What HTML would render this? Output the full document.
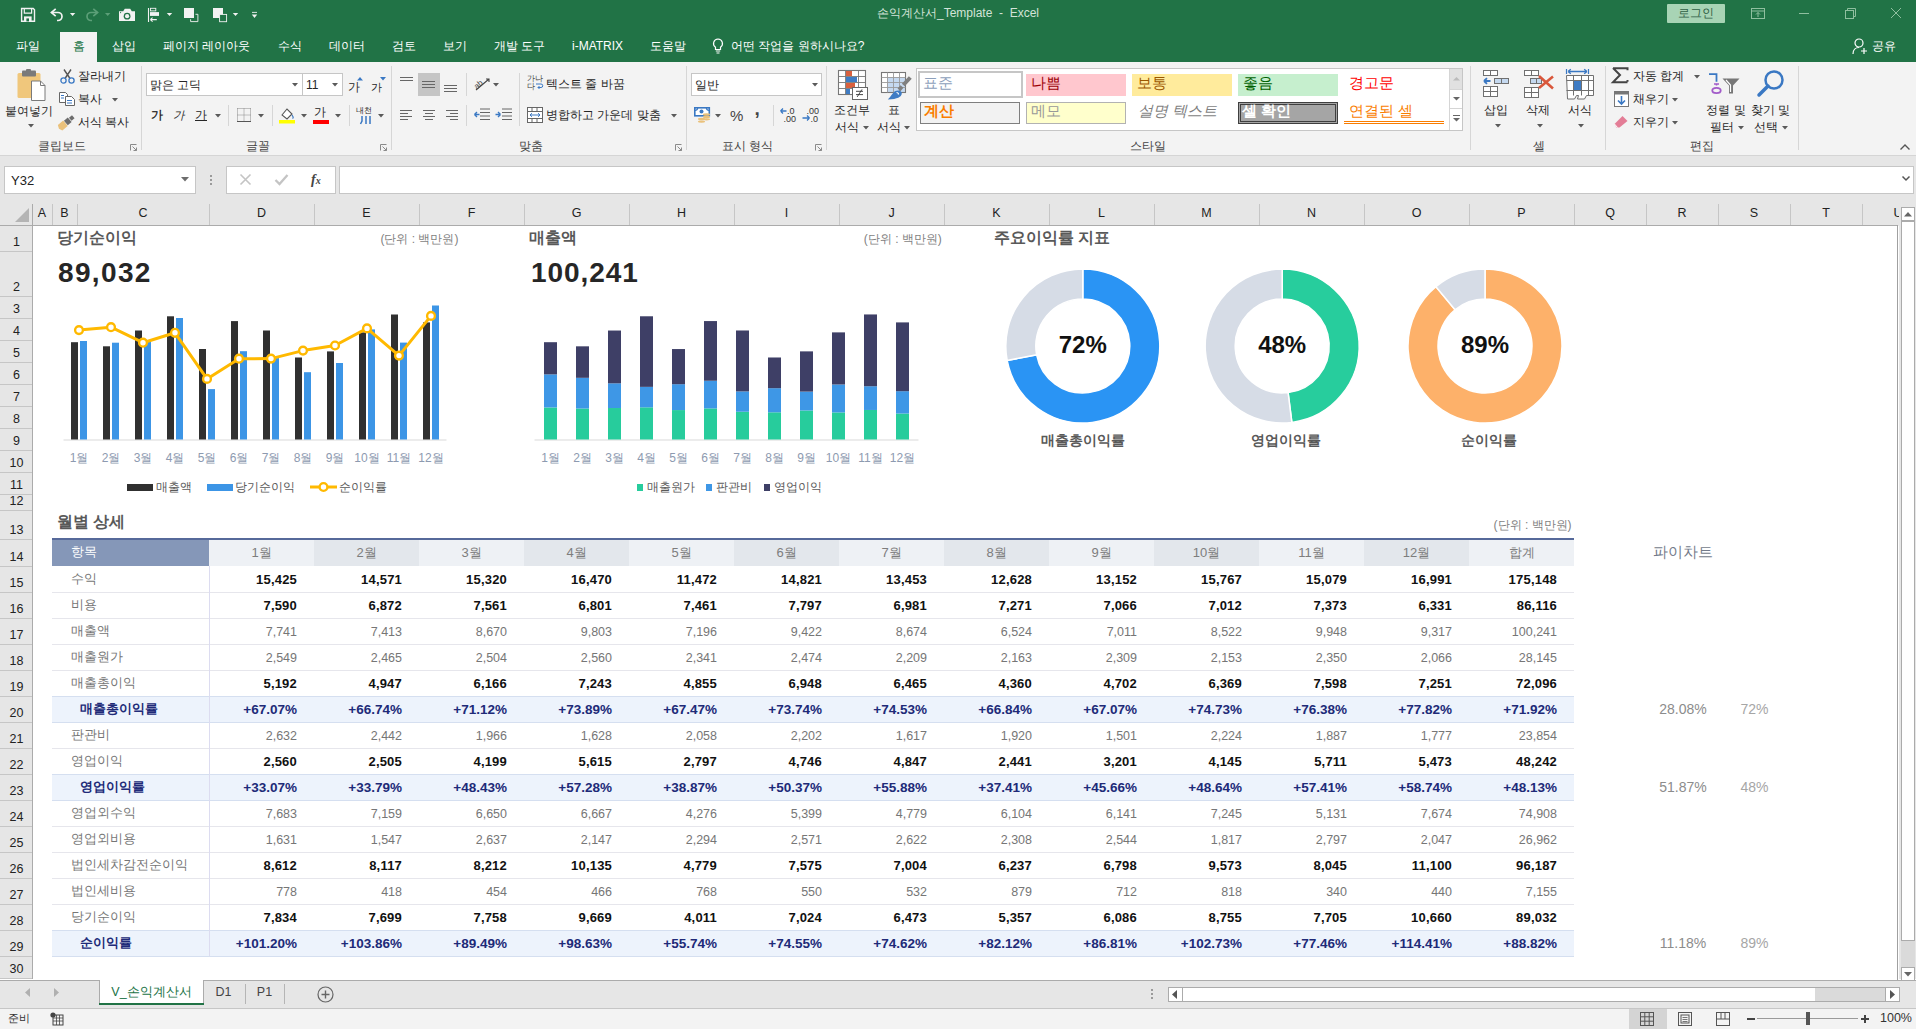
<!DOCTYPE html><html><head><meta charset="utf-8"><style>
html,body{margin:0;padding:0;}
body{width:1916px;height:1029px;position:relative;overflow:hidden;background:#fff;font-family:"Liberation Sans",sans-serif;}
.a{position:absolute;white-space:nowrap;}
svg.a{overflow:visible;}
</style></head><body>
<div class="a" style="left:0px;top:0px;width:1916px;height:62px;background:#217346;"></div>
<div class="a" style="left:0px;top:62px;width:1916px;height:93px;background:#f3f3f3;"></div>
<div class="a" style="left:0px;top:155px;width:1916px;height:1px;background:#d5d5d5;"></div>
<div class="a" style="left:0px;top:156px;width:1916px;height:70px;background:#e6e6e6;"></div>
<div class="a" style="left:0px;top:226px;width:32px;height:753px;background:#e6e6e6;"></div>
<svg class="a" style="left:0px;top:0px;" width="1" height="1" viewBox="0 0 1 1"><path d="M21.6 8.5h11.6l1.3 1.3v11.5h-12.9z" fill="none" stroke="#f2f2f2" stroke-width="1.4"/><path d="M24.3 8.5v4.6h7.3v-4.6" fill="none" stroke="#f2f2f2" stroke-width="1.2"/><rect x="24" y="16.4" width="7.6" height="5" fill="#f2f2f2"/><rect x="26.4" y="18.4" width="2.6" height="3" fill="#217346"/></svg>
<svg class="a" style="left:0px;top:0px;" width="1" height="1" viewBox="0 0 1 1"><path d="M51.5 12.5h6.5a4 4 0 0 1 0 8h-1" fill="none" stroke="#f2f2f2" stroke-width="1.7"/><path d="M55.7 8.8l-4.3 3.7l4.3 3.7" fill="none" stroke="#f2f2f2" stroke-width="1.7"/></svg>
<svg class="a" style="left:0px;top:0px;" width="1" height="1" viewBox="0 0 1 1"><path d="M69.9 12.9h5.4l-2.7 3z" fill="#f2f2f2"/></svg>
<svg class="a" style="left:0px;top:0px;" width="1" height="1" viewBox="0 0 1 1"><path d="M97.5 12.5h-6.5a4 4 0 0 0 0 8h1" fill="none" stroke="#5c9f78" stroke-width="1.7"/><path d="M93.3 8.8l4.3 3.7l-4.3 3.7" fill="none" stroke="#5c9f78" stroke-width="1.7"/></svg>
<svg class="a" style="left:0px;top:0px;" width="1" height="1" viewBox="0 0 1 1"><path d="M105 12.9h5.4l-2.7 3z" fill="#5c9f78"/></svg>
<svg class="a" style="left:0px;top:0px;" width="1" height="1" viewBox="0 0 1 1"><path d="M119 11.2h4.2l1.6-2.4h5.4l1.6 2.4h3.2v9.8h-16z" fill="#f2f2f2"/><circle cx="127.1" cy="16.2" r="3.4" fill="#217346"/><circle cx="127.1" cy="16.2" r="2.1" fill="#f2f2f2"/><circle cx="120.6" cy="12.6" r="0.6" fill="#217346"/></svg>
<svg class="a" style="left:0px;top:0px;" width="1" height="1" viewBox="0 0 1 1"><path d="M148.5 8v14" stroke="#f2f2f2" stroke-width="1.1"/><rect x="150.5" y="8.3" width="5.3" height="2.6" fill="none" stroke="#f2f2f2" stroke-width="0.9"/><rect x="150" y="12.1" width="9" height="3.8" fill="#f2f2f2"/><path d="M150.3 19.6h6.5M150.3 19.6l2.3-2M150.3 19.6l2.3 2" fill="none" stroke="#f2f2f2" stroke-width="1.1"/></svg>
<svg class="a" style="left:0px;top:0px;" width="1" height="1" viewBox="0 0 1 1"><path d="M166.8 12.9h5.4l-2.7 3z" fill="#f2f2f2"/></svg>
<svg class="a" style="left:0px;top:0px;" width="1" height="1" viewBox="0 0 1 1"><rect x="184" y="8" width="10" height="10" fill="#f2f2f2"/><path d="M195.5 14.3h2.4v7.3h-7.3v-2.4" fill="none" stroke="#f2f2f2" stroke-width="0.9"/></svg>
<svg class="a" style="left:0px;top:0px;" width="1" height="1" viewBox="0 0 1 1"><rect x="213" y="8" width="10" height="10" fill="#f2f2f2"/><rect x="219.6" y="14.4" width="7" height="7.3" fill="#217346" stroke="#f2f2f2" stroke-width="0.9"/></svg>
<svg class="a" style="left:0px;top:0px;" width="1" height="1" viewBox="0 0 1 1"><path d="M232.8 12.9h5.4l-2.7 3z" fill="#f2f2f2"/></svg>
<svg class="a" style="left:0px;top:0px;" width="1" height="1" viewBox="0 0 1 1"><path d="M252 12.4h5" stroke="#f2f2f2" stroke-width="0.9"/><path d="M251.8 14.6h5.4l-2.7 3.3z" fill="#f2f2f2"/></svg>
<div class="a" style="top:5.0px;font-size:12px;line-height:16px;color:#d3e3d8;left:658.0px;width:600px;text-align:center;">손익계산서_Template&nbsp;&nbsp;-&nbsp;&nbsp;Excel</div>
<div class="a" style="left:1667px;top:4px;width:58px;height:19px;background:#a8d4b5;border-radius:1px;"></div>
<div class="a" style="top:5.0px;font-size:12px;line-height:16px;color:#2f6045;left:1396.0px;width:600px;text-align:center;">로그인</div>
<svg class="a" style="left:1751px;top:8px;" width="14" height="11" viewBox="0 0 14 11"><rect x="0.5" y="0.5" width="13" height="10" fill="none" stroke="#8fbf9f" stroke-width="1"/><path d="M0.5 3h13M7 9V4.5M5 6.5l2-2 2 2" fill="none" stroke="#8fbf9f" stroke-width="1"/></svg>
<div class="a" style="left:1799px;top:13px;width:10px;height:1px;background:#8fbf9f;"></div>
<svg class="a" style="left:1845px;top:8px;" width="11" height="11" viewBox="0 0 11 11"><rect x="0.5" y="2.5" width="8" height="8" fill="none" stroke="#8fbf9f"/><path d="M2.5 2.5v-2h8v8h-2" fill="none" stroke="#8fbf9f"/></svg>
<svg class="a" style="left:1891px;top:8px;" width="10" height="10" viewBox="0 0 10 10"><path d="M0 0l10 10M10 0l-10 10" stroke="#8fbf9f" stroke-width="1"/></svg>
<div class="a" style="left:60px;top:32px;width:37px;height:30px;background:#f3f3f3;"></div>
<div class="a" style="top:38.0px;font-size:12px;line-height:16px;color:#fff;left:16.0px;">파일</div>
<div class="a" style="top:38.0px;font-size:12px;line-height:16px;color:#217346;left:72.5px;">홈</div>
<div class="a" style="top:38.0px;font-size:12px;line-height:16px;color:#fff;left:111.5px;">삽입</div>
<div class="a" style="top:38.0px;font-size:12px;line-height:16px;color:#fff;left:162.5px;">페이지 레이아웃</div>
<div class="a" style="top:38.0px;font-size:12px;line-height:16px;color:#fff;left:277.5px;">수식</div>
<div class="a" style="top:38.0px;font-size:12px;line-height:16px;color:#fff;left:329.0px;">데이터</div>
<div class="a" style="top:38.0px;font-size:12px;line-height:16px;color:#fff;left:392.0px;">검토</div>
<div class="a" style="top:38.0px;font-size:12px;line-height:16px;color:#fff;left:442.5px;">보기</div>
<div class="a" style="top:38.0px;font-size:12px;line-height:16px;color:#fff;left:493.5px;">개발 도구</div>
<div class="a" style="top:38.0px;font-size:12px;line-height:16px;color:#fff;left:572.0px;">i-MATRIX</div>
<div class="a" style="top:38.0px;font-size:12px;line-height:16px;color:#fff;left:650.0px;">도움말</div>
<div class="a" style="top:38.0px;font-size:12px;line-height:16px;color:#fff;left:731.0px;">어떤 작업을 원하시나요?</div>
<svg class="a" style="left:712px;top:38px;" width="12" height="16" viewBox="0 0 12 16"><path d="M6 1a4.5 4.5 0 0 0-2.5 8.2v2.3h5v-2.3A4.5 4.5 0 0 0 6 1z" fill="none" stroke="#fff" stroke-width="1.2"/><path d="M3.8 13h4.4M4.5 15h3" stroke="#fff" stroke-width="1.1"/></svg>
<svg class="a" style="left:1852px;top:38px;" width="16" height="17" viewBox="0 0 16 17"><circle cx="7" cy="5" r="4" fill="none" stroke="#fff" stroke-width="1.2"/><path d="M1 16c0-4 2.5-6.5 6-6.5" fill="none" stroke="#fff" stroke-width="1.2"/><path d="M12 10v6M9 13h6" stroke="#fff" stroke-width="1.2"/></svg>
<div class="a" style="top:38.0px;font-size:12px;line-height:16px;color:#fff;left:1872.0px;">공유</div>
<div class="a" style="left:141px;top:66px;width:1px;height:84px;background:#d6d6d6;"></div>
<div class="a" style="left:391px;top:66px;width:1px;height:84px;background:#d6d6d6;"></div>
<div class="a" style="left:686px;top:66px;width:1px;height:84px;background:#d6d6d6;"></div>
<div class="a" style="left:826px;top:66px;width:1px;height:84px;background:#d6d6d6;"></div>
<div class="a" style="left:1470px;top:66px;width:1px;height:84px;background:#d6d6d6;"></div>
<div class="a" style="left:1605px;top:66px;width:1px;height:84px;background:#d6d6d6;"></div>
<div class="a" style="left:1798px;top:66px;width:1px;height:84px;background:#d6d6d6;"></div>
<div class="a" style="top:137.5px;font-size:12px;line-height:16px;color:#444;left:-238.5px;width:600px;text-align:center;">클립보드</div>
<div class="a" style="top:137.5px;font-size:12px;line-height:16px;color:#444;left:-42.0px;width:600px;text-align:center;">글꼴</div>
<div class="a" style="top:137.5px;font-size:12px;line-height:16px;color:#444;left:231.0px;width:600px;text-align:center;">맞춤</div>
<div class="a" style="top:137.5px;font-size:12px;line-height:16px;color:#444;left:447.5px;width:600px;text-align:center;">표시 형식</div>
<div class="a" style="top:137.5px;font-size:12px;line-height:16px;color:#444;left:848.0px;width:600px;text-align:center;">스타일</div>
<div class="a" style="top:137.5px;font-size:12px;line-height:16px;color:#444;left:1238.5px;width:600px;text-align:center;">셀</div>
<div class="a" style="top:137.5px;font-size:12px;line-height:16px;color:#444;left:1401.5px;width:600px;text-align:center;">편집</div>
<svg class="a" style="left:130px;top:144px;" width="7" height="7" viewBox="0 0 7 7"><path d="M0.5 6.5v-6h6" fill="none" stroke="#8a8a8a" stroke-width="1"/><path d="M2.5 2.5l4 4M3.5 6.5h3v-3" fill="none" stroke="#8a8a8a" stroke-width="1"/></svg>
<svg class="a" style="left:380px;top:144px;" width="7" height="7" viewBox="0 0 7 7"><path d="M0.5 6.5v-6h6" fill="none" stroke="#8a8a8a" stroke-width="1"/><path d="M2.5 2.5l4 4M3.5 6.5h3v-3" fill="none" stroke="#8a8a8a" stroke-width="1"/></svg>
<svg class="a" style="left:675px;top:144px;" width="7" height="7" viewBox="0 0 7 7"><path d="M0.5 6.5v-6h6" fill="none" stroke="#8a8a8a" stroke-width="1"/><path d="M2.5 2.5l4 4M3.5 6.5h3v-3" fill="none" stroke="#8a8a8a" stroke-width="1"/></svg>
<svg class="a" style="left:815px;top:144px;" width="7" height="7" viewBox="0 0 7 7"><path d="M0.5 6.5v-6h6" fill="none" stroke="#8a8a8a" stroke-width="1"/><path d="M2.5 2.5l4 4M3.5 6.5h3v-3" fill="none" stroke="#8a8a8a" stroke-width="1"/></svg>
<svg class="a" style="left:17px;top:70px;" width="29" height="31" viewBox="0 0 29 31"><rect x="0.5" y="3" width="23" height="25" rx="1.5" fill="#f0c77c"/><rect x="5" y="0.5" width="14" height="6" rx="1" fill="#7a7a7a"/><rect x="9" y="-1" width="5" height="3" rx="1" fill="#7a7a7a"/><path d="M14.5 11h9l4.5 4.5v15h-13.5z" fill="#fff" stroke="#7a7a7a" stroke-width="1"/><path d="M23.5 11v4.5h4.5" fill="none" stroke="#7a7a7a" stroke-width="1"/></svg>
<div class="a" style="top:102.5px;font-size:12px;line-height:16px;color:#262626;left:-271.5px;width:600px;text-align:center;">붙여넣기</div>
<svg class="a" style="left:28px;top:123.5px;" width="6" height="4" viewBox="0 0 6 4"><path d="M0 0h6l-3 3.5z" fill="#5a5a5a"/></svg>
<svg class="a" style="left:60px;top:69px;" width="15" height="15" viewBox="0 0 15 15"><path d="M4 0.5l6 9M11 0.5l-6 9" stroke="#555" stroke-width="1.4"/><circle cx="3.5" cy="11.5" r="2.6" fill="none" stroke="#3a78c3" stroke-width="1.3"/><circle cx="11.5" cy="11.5" r="2.6" fill="none" stroke="#3a78c3" stroke-width="1.3"/></svg>
<div class="a" style="top:68.0px;font-size:12px;line-height:16px;color:#262626;left:78.0px;">잘라내기</div>
<svg class="a" style="left:59px;top:92px;" width="16" height="14" viewBox="0 0 16 14"><path d="M0.5 0.5h6l2 2v8h-8z" fill="#fff" stroke="#666"/><path d="M6.5 4.5h6l3 3v6h-9z" fill="#fff" stroke="#666"/><path d="M2 3.5h3M2 6h3M8 8.5h5M8 11h5" stroke="#3a78c3" stroke-width="1"/></svg>
<div class="a" style="top:91.0px;font-size:12px;line-height:16px;color:#262626;left:78.0px;">복사</div>
<svg class="a" style="left:111.5px;top:98.0px;" width="6" height="4" viewBox="0 0 6 4"><path d="M0 0h6l-3 3.5z" fill="#5a5a5a"/></svg>
<svg class="a" style="left:58px;top:113px;" width="18" height="17" viewBox="0 0 18 17"><g transform="rotate(-40 9 9)"><path d="M0 5.5h7v7h-7l-1.5-3.5z" fill="#eac17b"/><rect x="7.5" y="6" width="5" height="6" fill="#6d6d6d"/><rect x="13.2" y="7" width="4" height="4" fill="#6d6d6d"/></g></svg>
<div class="a" style="top:114.0px;font-size:12px;line-height:16px;color:#262626;left:78.0px;">서식 복사</div>
<div class="a" style="left:146px;top:73px;width:157px;height:23px;box-sizing:border-box;border:1px solid #c6c6c6;background:#fff;"></div>
<div class="a" style="top:76.5px;font-size:12px;line-height:16px;color:#262626;left:150.0px;">맑은 고딕</div>
<svg class="a" style="left:292px;top:83.0px;" width="6" height="4" viewBox="0 0 6 4"><path d="M0 0h6l-3 3.5z" fill="#5a5a5a"/></svg>
<div class="a" style="left:302px;top:73px;width:41px;height:23px;box-sizing:border-box;border:1px solid #c6c6c6;background:#fff;"></div>
<div class="a" style="top:76.5px;font-size:12px;line-height:16px;color:#262626;left:306.0px;">11</div>
<svg class="a" style="left:332px;top:83.0px;" width="6" height="4" viewBox="0 0 6 4"><path d="M0 0h6l-3 3.5z" fill="#5a5a5a"/></svg>
<div class="a" style="top:78.5px;font-size:12px;line-height:16px;color:#262626;left:348.0px;">가</div>
<svg class="a" style="left:357px;top:77px;" width="6" height="4" viewBox="0 0 6 4"><path d="M0 3.5h6l-3-3.5z" fill="#3a78c3"/></svg>
<div class="a" style="top:79.5px;font-size:11px;line-height:15px;color:#262626;left:371.0px;">가</div>
<svg class="a" style="left:380px;top:77px;" width="6" height="4" viewBox="0 0 6 4"><path d="M0 0h6l-3 3.5z" fill="#3a78c3"/></svg>
<div class="a" style="top:107.0px;font-size:11.5px;line-height:16px;color:#111;left:151.0px;-webkit-text-stroke:0.3px #111;">가</div>
<div class="a" style="top:107.0px;font-size:11.5px;line-height:16px;color:#262626;left:173.0px;"><i>가</i></div>
<div class="a" style="top:107.0px;font-size:11.5px;line-height:16px;color:#262626;left:195.0px;"><u>가</u></div>
<svg class="a" style="left:214.5px;top:114.0px;" width="6" height="4" viewBox="0 0 6 4"><path d="M0 0h6l-3 3.5z" fill="#5a5a5a"/></svg>
<div class="a" style="left:228px;top:105px;width:1px;height:21px;background:#d6d6d6;"></div>
<svg class="a" style="left:237px;top:108px;" width="14" height="14" viewBox="0 0 14 14"><path d="M0.5 0.5h13M0.5 0.5v13M13.5 0.5v13M7 0.5v13M0.5 7h13" fill="none" stroke="#888" stroke-width="1" stroke-dasharray="1 1"/><path d="M0 13.5h14" stroke="#555" stroke-width="1"/></svg>
<svg class="a" style="left:257.5px;top:114.0px;" width="6" height="4" viewBox="0 0 6 4"><path d="M0 0h6l-3 3.5z" fill="#5a5a5a"/></svg>
<div class="a" style="left:272px;top:105px;width:1px;height:21px;background:#d6d6d6;"></div>
<svg class="a" style="left:279px;top:107px;" width="17" height="17" viewBox="0 0 17 17"><path d="M3 8l5-6l5 5l-5 5z" fill="#fff" stroke="#555" stroke-width="1.1"/><path d="M13 8c1.5 2 1.5 3 0.5 3.5" fill="none" stroke="#3a78c3" stroke-width="1.2"/><rect x="0" y="13" width="16" height="3.5" fill="#ffff00"/></svg>
<svg class="a" style="left:300.5px;top:114.0px;" width="6" height="4" viewBox="0 0 6 4"><path d="M0 0h6l-3 3.5z" fill="#5a5a5a"/></svg>
<div class="a" style="top:103.5px;font-size:12px;line-height:16px;color:#262626;left:313.5px;">가</div>
<div class="a" style="left:313px;top:120px;width:16px;height:3.5px;background:#ff0000;"></div>
<svg class="a" style="left:335px;top:114.0px;" width="6" height="4" viewBox="0 0 6 4"><path d="M0 0h6l-3 3.5z" fill="#5a5a5a"/></svg>
<div class="a" style="left:349px;top:105px;width:1px;height:21px;background:#d6d6d6;"></div>
<div class="a" style="top:104.5px;font-size:8px;line-height:11px;color:#262626;left:356.0px;">내천</div>
<svg class="a" style="left:360px;top:116px;" width="12" height="8" viewBox="0 0 12 8"><path d="M2 0v5l-1.5 3M6 0v8M10 0v8" fill="none" stroke="#3a78c3" stroke-width="1.5"/></svg>
<svg class="a" style="left:377.5px;top:114.0px;" width="6" height="4" viewBox="0 0 6 4"><path d="M0 0h6l-3 3.5z" fill="#5a5a5a"/></svg>
<svg class="a" style="left:400px;top:77px;" width="14" height="12" viewBox="0 0 14 12"><path d="M0 0.5h13" stroke="#666" stroke-width="1"/><path d="M0 3.5h13" stroke="#666" stroke-width="1"/></svg>
<div class="a" style="left:418px;top:73px;width:22px;height:23px;background:#c5c5c5;"></div>
<svg class="a" style="left:422px;top:81px;" width="14" height="12" viewBox="0 0 14 12"><path d="M0 0.5h13" stroke="#666" stroke-width="1"/><path d="M0 3.5h13" stroke="#666" stroke-width="1"/><path d="M0 6.5h13" stroke="#666" stroke-width="1"/></svg>
<svg class="a" style="left:444px;top:85px;" width="14" height="12" viewBox="0 0 14 12"><path d="M0 0.5h13" stroke="#666" stroke-width="1"/><path d="M0 3.5h13" stroke="#666" stroke-width="1"/><path d="M0 6.5h13" stroke="#666" stroke-width="1"/></svg>
<div class="a" style="left:466px;top:73px;width:1px;height:23px;background:#d6d6d6;"></div>
<svg class="a" style="left:400px;top:110px;" width="14" height="12" viewBox="0 0 14 12"><path d="M0 0.5h12" stroke="#666" stroke-width="1"/><path d="M0 3.5h8" stroke="#666" stroke-width="1"/><path d="M0 6.5h12" stroke="#666" stroke-width="1"/><path d="M0 9.5h8" stroke="#666" stroke-width="1"/></svg>
<svg class="a" style="left:422px;top:110px;" width="14" height="12" viewBox="0 0 14 12"><path d="M1.0 0.5h12" stroke="#666" stroke-width="1"/><path d="M3.0 3.5h8" stroke="#666" stroke-width="1"/><path d="M1.0 6.5h12" stroke="#666" stroke-width="1"/><path d="M3.0 9.5h8" stroke="#666" stroke-width="1"/></svg>
<svg class="a" style="left:444px;top:110px;" width="14" height="12" viewBox="0 0 14 12"><path d="M2 0.5h12" stroke="#666" stroke-width="1"/><path d="M6 3.5h8" stroke="#666" stroke-width="1"/><path d="M2 6.5h12" stroke="#666" stroke-width="1"/><path d="M6 9.5h8" stroke="#666" stroke-width="1"/></svg>
<div class="a" style="left:466px;top:105px;width:1px;height:21px;background:#d6d6d6;"></div>
<svg class="a" style="left:474px;top:76px;" width="17" height="15" viewBox="0 0 17 15"><text x="0" y="10" font-size="8" fill="#444" transform="rotate(-40 6 8)" font-family="Liberation Sans">ab</text><path d="M2 14l13-11M12 3h3v3" fill="none" stroke="#444" stroke-width="1.1"/></svg>
<svg class="a" style="left:493px;top:83.0px;" width="6" height="4" viewBox="0 0 6 4"><path d="M0 0h6l-3 3.5z" fill="#5a5a5a"/></svg>
<svg class="a" style="left:474px;top:108px;" width="16" height="14" viewBox="0 0 16 14"><path d="M6 1h10M6 4.5h10M6 8h10M6 11.5h10" stroke="#666" stroke-width="1"/><path d="M0.5 6.5h5M0.5 6.5l2.5-2.5M0.5 6.5l2.5 2.5" fill="none" stroke="#3a78c3" stroke-width="1.4"/></svg>
<svg class="a" style="left:495px;top:108px;" width="17" height="14" viewBox="0 0 17 14"><path d="M7 1h10M7 4.5h10M7 8h10M7 11.5h10" stroke="#666" stroke-width="1"/><path d="M0.5 6.5h5M5.5 6.5l-2.5-2.5M5.5 6.5l-2.5 2.5" fill="none" stroke="#3a78c3" stroke-width="1.4"/></svg>
<div class="a" style="left:519px;top:73px;width:1px;height:53px;background:#d6d6d6;"></div>
<div class="a" style="top:73.5px;font-size:7.5px;line-height:10px;color:#444;left:527.0px;">가나</div>
<div class="a" style="top:81.5px;font-size:7.5px;line-height:10px;color:#444;left:527.0px;">다</div>
<svg class="a" style="left:535px;top:83px;" width="8" height="8" viewBox="0 0 8 8"><path d="M1 1h5a1.5 1.5 0 0 1 0 3.5h-3M3 4.5l1.5-1.5M3 4.5l1.5 1.5" fill="none" stroke="#3a78c3" stroke-width="1"/></svg>
<div class="a" style="top:76.0px;font-size:12px;line-height:16px;color:#262626;left:546.0px;">텍스트 줄 바꿈</div>
<svg class="a" style="left:527px;top:107px;" width="16" height="16" viewBox="0 0 16 16"><rect x="0.5" y="0.5" width="15" height="15" fill="#fff" stroke="#666"/><path d="M0.5 4.5h15M0.5 11.5h15M5 0.5v4M10 0.5v4M5 11.5v4M10 11.5v4" stroke="#666"/><path d="M3 8h10M3 8l2-1.8M3 8l2 1.8M13 8l-2-1.8M13 8l-2 1.8" fill="none" stroke="#3a78c3" stroke-width="1"/></svg>
<div class="a" style="top:107.0px;font-size:12px;line-height:16px;color:#262626;left:546.0px;">병합하고 가운데 맞춤</div>
<svg class="a" style="left:671px;top:114.0px;" width="6" height="4" viewBox="0 0 6 4"><path d="M0 0h6l-3 3.5z" fill="#5a5a5a"/></svg>
<div class="a" style="left:691px;top:73px;width:131px;height:23px;box-sizing:border-box;border:1px solid #c6c6c6;background:#fff;"></div>
<div class="a" style="top:76.5px;font-size:12px;line-height:16px;color:#262626;left:695.0px;">일반</div>
<svg class="a" style="left:812px;top:83.0px;" width="6" height="4" viewBox="0 0 6 4"><path d="M0 0h6l-3 3.5z" fill="#5a5a5a"/></svg>
<svg class="a" style="left:694px;top:107px;" width="18" height="17" viewBox="0 0 18 17"><rect x="0.8" y="0.8" width="14.5" height="8" fill="#fff" stroke="#3a78c3" stroke-width="1.6"/><path d="M0.8 3.5a3 3 0 0 0 3-2.7M15.3 3.5a3 3 0 0 1-3-2.7" fill="none" stroke="#3a78c3" stroke-width="1.2"/><circle cx="7.5" cy="4.5" r="2" fill="#3a78c3"/><ellipse cx="12.5" cy="7.5" rx="3.6" ry="1.3" fill="#eac17b"/><ellipse cx="12.5" cy="10" rx="3.6" ry="1.3" fill="#eac17b"/><ellipse cx="12.5" cy="12.3" rx="3.6" ry="1.1" fill="#eac17b"/><ellipse cx="7.5" cy="12" rx="3.6" ry="1.3" fill="#eac17b"/><ellipse cx="7.5" cy="14.6" rx="3.6" ry="1.2" fill="#eac17b"/></svg>
<svg class="a" style="left:715px;top:114.0px;" width="6" height="4" viewBox="0 0 6 4"><path d="M0 0h6l-3 3.5z" fill="#5a5a5a"/></svg>
<div class="a" style="top:104.5px;font-size:15px;line-height:21px;color:#444;left:730.0px;">%</div>
<div class="a" style="top:95.5px;font-size:19px;line-height:26px;color:#444;font-weight:bold;left:754.5px;">,</div>
<div class="a" style="left:773px;top:105px;width:1px;height:21px;background:#d6d6d6;"></div>
<svg class="a" style="left:780px;top:107px;" width="17" height="15" viewBox="0 0 17 15"><text x="7" y="7" font-size="9" fill="#333" font-family="Liberation Sans">.0</text><text x="3.5" y="14.5" font-size="9" fill="#333" font-family="Liberation Sans">.00</text><path d="M0.5 4h6M0.5 4l2.5-2.5M0.5 4l2.5 2.5" fill="none" stroke="#3a78c3" stroke-width="1.3"/></svg>
<svg class="a" style="left:802px;top:107px;" width="17" height="15" viewBox="0 0 17 15"><text x="4.5" y="7" font-size="9" fill="#333" font-family="Liberation Sans">.00</text><text x="8.5" y="14.5" font-size="9" fill="#333" font-family="Liberation Sans">.0</text><path d="M0.5 11h7M7.5 11l-2.5-2.5M7.5 11l-2.5 2.5" fill="none" stroke="#3a78c3" stroke-width="1.3"/></svg>
<svg class="a" style="left:0px;top:0px;" width="1" height="1" viewBox="0 0 1 1"><rect x="838.5" y="70.5" width="27" height="24" fill="#fff" stroke="#777" stroke-width="1.1"/><path d="M838.5 76.5h27M838.5 82.5h27M838.5 88.5h27M845.5 70.5v24M858.5 70.5v24" stroke="#777" stroke-width="0.9"/><rect x="846" y="71" width="6" height="5" fill="#d9603e"/><rect x="846" y="77" width="11" height="5" fill="#3f7cc4"/><rect x="846" y="83" width="9" height="5" fill="#d9603e"/><rect x="846" y="89" width="4" height="5" fill="#3f7cc4"/><rect x="852.5" y="87.5" width="15" height="12" fill="#fff" stroke="#666" stroke-width="1"/><path d="M856 91.3h7M856 94.6h7M862 89.4l-4.8 7.5" stroke="#333" stroke-width="0.9"/></svg>
<div class="a" style="top:102.0px;font-size:12px;line-height:16px;color:#262626;left:552.0px;width:600px;text-align:center;">조건부</div>
<div class="a" style="top:118.5px;font-size:12px;line-height:16px;color:#262626;left:547.0px;width:600px;text-align:center;">서식</div>
<svg class="a" style="left:862.5px;top:125.5px;" width="6" height="4" viewBox="0 0 6 4"><path d="M0 0h6l-3 3.5z" fill="#5a5a5a"/></svg>
<svg class="a" style="left:0px;top:0px;" width="1" height="1" viewBox="0 0 1 1"><rect x="881.5" y="72.5" width="24" height="20" fill="#fff"/><rect x="887.5" y="77.5" width="18" height="15" fill="#c5d9f0"/><rect x="881.5" y="72.5" width="24" height="20" fill="none" stroke="#777" stroke-width="1.1"/><path d="M881.5 77.5h24M881.5 82.5h24M881.5 87.5h24M887.5 72.5v20M893.5 72.5v20M899.5 72.5v20" stroke="#9a9a9a" stroke-width="0.9"/><path d="M910.3 77.5l-7 7.5M902 86.5l-3 3.3" stroke="#808080" stroke-width="4"/><path d="M898.5 90.5c2 0 3.5 1.5 3.3 3.3c-0.5 3-4 5.5-14 5.8c3-3 5-7 7-8.3c1.2-0.6 2.5-0.8 3.7-0.8z" fill="#3f7cc4"/><path d="M896.5 92.5c1 0 2 0.8 2 2" fill="none" stroke="#fff" stroke-width="1.2"/></svg>
<div class="a" style="top:102.0px;font-size:12px;line-height:16px;color:#262626;left:593.5px;width:600px;text-align:center;">표</div>
<div class="a" style="top:118.5px;font-size:12px;line-height:16px;color:#262626;left:588.5px;width:600px;text-align:center;">서식</div>
<svg class="a" style="left:904px;top:125.5px;" width="6" height="4" viewBox="0 0 6 4"><path d="M0 0h6l-3 3.5z" fill="#5a5a5a"/></svg>
<div class="a" style="left:916px;top:68px;width:547px;height:63px;box-sizing:border-box;border:1px solid #c6c6c6;background:#fff;"></div>
<div class="a" style="left:918px;top:71px;width:105px;height:27px;box-sizing:border-box;border:2px solid #c6c6c6;background:#fff;"></div>
<div class="a" style="top:72.0px;font-size:15px;line-height:21px;color:#8da0bb;left:923.0px;">표준</div>
<div class="a" style="left:1026px;top:74px;width:100px;height:22px;background:#ffc7ce;"></div>
<div class="a" style="top:72.0px;font-size:15px;line-height:21px;color:#9c0006;left:1031.0px;">나쁨</div>
<div class="a" style="left:1132px;top:74px;width:100px;height:22px;background:#ffeb9c;"></div>
<div class="a" style="top:72.0px;font-size:15px;line-height:21px;color:#9c5700;left:1137.0px;">보통</div>
<div class="a" style="left:1238px;top:74px;width:100px;height:22px;background:#c6efce;"></div>
<div class="a" style="top:72.0px;font-size:15px;line-height:21px;color:#006100;left:1243.0px;">좋음</div>
<div class="a" style="top:72.0px;font-size:15px;line-height:21px;color:#ff0000;left:1349.0px;">경고문</div>
<div class="a" style="left:920px;top:102px;width:100px;height:22px;box-sizing:border-box;border:1px solid #7f7f7f;background:#f2f2f2;"></div>
<div class="a" style="top:100.0px;font-size:15px;line-height:21px;color:#fa7d00;font-weight:bold;left:924.0px;">계산</div>
<div class="a" style="left:1026px;top:102px;width:100px;height:22px;box-sizing:border-box;border:1px solid #b2b2b2;background:#ffffcc;"></div>
<div class="a" style="top:100.0px;font-size:15px;line-height:21px;color:#999;left:1031.0px;">메모</div>
<div class="a" style="top:100.0px;font-size:15px;line-height:21px;color:#7f7f7f;left:1138.0px;"><i>설명 텍스트</i></div>
<div class="a" style="left:1238px;top:102px;width:100px;height:22px;box-sizing:border-box;border:3px double #3f3f3f;background:#a5a5a5;"></div>
<div class="a" style="top:100.0px;font-size:15px;line-height:21px;color:#fff;font-weight:bold;left:1242.0px;">셀 확인</div>
<div class="a" style="top:100.0px;font-size:15px;line-height:21px;color:#fa7d00;left:1349.0px;">연결된 셀</div>
<div class="a" style="left:1344px;top:121px;width:100px;height:1px;background:#fa7d00;"></div>
<div class="a" style="left:1344px;top:123px;width:100px;height:1px;background:#fa7d00;"></div>
<div class="a" style="left:1449px;top:69px;width:1px;height:61px;background:#d5d5d5;"></div>
<div class="a" style="left:1450px;top:69px;width:12px;height:20px;background:#e1e1e1;"></div>
<svg class="a" style="left:1453px;top:77px;" width="7" height="4" viewBox="0 0 7 4"><path d="M0 3.5h7l-3.5-3.5z" fill="#bbb"/></svg>
<div class="a" style="left:1450px;top:89px;width:12px;height:1px;background:#d5d5d5;"></div>
<svg class="a" style="left:1453px;top:97px;" width="7" height="4" viewBox="0 0 7 4"><path d="M0 0h7l-3.5 3.5z" fill="#666"/></svg>
<div class="a" style="left:1450px;top:108px;width:12px;height:1px;background:#d5d5d5;"></div>
<svg class="a" style="left:1453px;top:115px;" width="7" height="7" viewBox="0 0 7 7"><path d="M0 0.5h7" stroke="#666"/><path d="M0 3h7l-3.5 3.5z" fill="#666"/></svg>
<svg class="a" style="left:0px;top:0px;" width="1" height="1" viewBox="0 0 1 1"><rect x="1483.5" y="70.5" width="14" height="5" fill="#fff" stroke="#707070"/><path d="M1490.5 70.5v5" stroke="#707070"/><rect x="1494.5" y="78.5" width="14" height="5" fill="#c5d9f0" stroke="#707070"/><path d="M1501.5 78.5v5" stroke="#707070"/><path d="M1484 81h6.5M1484 81l3-2.8M1484 81l3 2.8" fill="none" stroke="#3a78c3" stroke-width="1.8"/><rect x="1483.5" y="86.5" width="14" height="10" fill="#fff" stroke="#707070"/><path d="M1490.5 86.5v10M1483.5 91.5h14" stroke="#707070"/></svg>
<div class="a" style="top:102.0px;font-size:12px;line-height:16px;color:#262626;left:1196.0px;width:600px;text-align:center;">삽입</div>
<svg class="a" style="left:1494.5px;top:123.5px;" width="6" height="4" viewBox="0 0 6 4"><path d="M0 0h6l-3 3.5z" fill="#5a5a5a"/></svg>
<svg class="a" style="left:0px;top:0px;" width="1" height="1" viewBox="0 0 1 1"><rect x="1524.5" y="70.5" width="14" height="5" fill="#fff" stroke="#707070"/><path d="M1531.5 70.5v5" stroke="#707070"/><rect x="1530.5" y="78.5" width="11" height="5" fill="#c5d9f0" stroke="#707070"/><path d="M1536.5 78.5v5" stroke="#707070"/><rect x="1524.5" y="87.5" width="14" height="10" fill="#fff" stroke="#707070"/><path d="M1531.5 87.5v10M1524.5 92.5h14" stroke="#707070"/><path d="M1539 76l14 12.5M1539 88l14-11.5" stroke="#d9573b" stroke-width="2.6"/></svg>
<div class="a" style="top:102.0px;font-size:12px;line-height:16px;color:#262626;left:1238.0px;width:600px;text-align:center;">삭제</div>
<svg class="a" style="left:1536.5px;top:123.5px;" width="6" height="4" viewBox="0 0 6 4"><path d="M0 0h6l-3 3.5z" fill="#5a5a5a"/></svg>
<svg class="a" style="left:0px;top:0px;" width="1" height="1" viewBox="0 0 1 1"><path d="M1566.5 69v5M1588.5 69v5" stroke="#3a78c3" stroke-width="1.2"/><path d="M1568 71.5h19M1568 71.5l2.8-2.3M1568 71.5l2.8 2.3M1587 71.5l-2.8-2.3M1587 71.5l-2.8 2.3" fill="none" stroke="#3a78c3" stroke-width="1.3"/><path d="M1566.5 75.5h27v20h-7l-2 3.5h-7l1-3.5h-2l-2 3.5h-7z" fill="#fff" stroke="#707070"/><path d="M1566.5 80.5h27M1566.5 90.5h27M1573.5 75.5v20M1581.5 75.5v20M1588.5 75.5v20" stroke="#707070" stroke-width="1"/><rect x="1574" y="81" width="7" height="9" fill="#3f7cc4"/></svg>
<div class="a" style="top:102.0px;font-size:12px;line-height:16px;color:#262626;left:1280.0px;width:600px;text-align:center;">서식</div>
<svg class="a" style="left:1578px;top:123.5px;" width="6" height="4" viewBox="0 0 6 4"><path d="M0 0h6l-3 3.5z" fill="#5a5a5a"/></svg>
<svg class="a" style="left:1612px;top:67px;" width="17" height="17" viewBox="0 0 17 17"><path d="M1 1.2h14.5v2M15.5 14.8v-1.8M15.5 15.2h-14.5l7-7.2l-7-7" fill="none" stroke="#444" stroke-width="2" stroke-linejoin="miter"/></svg>
<div class="a" style="top:68.0px;font-size:12px;line-height:16px;color:#262626;left:1633.0px;">자동 합계</div>
<svg class="a" style="left:1693.5px;top:75.0px;" width="6" height="4" viewBox="0 0 6 4"><path d="M0 0h6l-3 3.5z" fill="#5a5a5a"/></svg>
<svg class="a" style="left:1614px;top:91px;" width="15" height="16" viewBox="0 0 15 16"><rect x="0.5" y="0.5" width="14" height="15" fill="#fff" stroke="#777"/><rect x="0.5" y="0.5" width="14" height="3" fill="#777"/><path d="M7.5 5v8M4 9.5l3.5 3.5l3.5-3.5" fill="none" stroke="#3a78c3" stroke-width="1.6"/></svg>
<div class="a" style="top:91.0px;font-size:12px;line-height:16px;color:#262626;left:1633.0px;">채우기</div>
<svg class="a" style="left:1672px;top:98.0px;" width="6" height="4" viewBox="0 0 6 4"><path d="M0 0h6l-3 3.5z" fill="#5a5a5a"/></svg>
<svg class="a" style="left:1614px;top:115px;" width="14" height="13" viewBox="0 0 14 13"><path d="M0.5 9l8-8l5 5l-8 6.5h-3z" fill="#e37d96"/><path d="M0.5 9l3 3.5" stroke="#fff" stroke-width="1"/></svg>
<div class="a" style="top:114.0px;font-size:12px;line-height:16px;color:#262626;left:1633.0px;">지우기</div>
<svg class="a" style="left:1672px;top:121.0px;" width="6" height="4" viewBox="0 0 6 4"><path d="M0 0h6l-3 3.5z" fill="#5a5a5a"/></svg>
<svg class="a" style="left:1709px;top:73px;" width="34" height="22" viewBox="0 0 34 22"><path d="M0 1.2h7.5v7.5" fill="none" stroke="#3a78c3" stroke-width="1.8"/><path d="M5 11h5M7.5 11v1.5" stroke="#a25bc9" stroke-width="1.6"/><ellipse cx="7.5" cy="17.5" rx="4.2" ry="2.6" fill="none" stroke="#a25bc9" stroke-width="1.8"/><path d="M13.5 5.5h17l-6.5 7v8h-4v-8z" fill="#777"/><path d="M17 7l4.5 5v7" fill="none" stroke="#fff" stroke-width="1.2"/></svg>
<div class="a" style="top:102.0px;font-size:12px;line-height:16px;color:#262626;left:1426.0px;width:600px;text-align:center;">정렬 및</div>
<div class="a" style="top:118.5px;font-size:12px;line-height:16px;color:#262626;left:1422.0px;width:600px;text-align:center;">필터</div>
<svg class="a" style="left:1737.5px;top:125.5px;" width="6" height="4" viewBox="0 0 6 4"><path d="M0 0h6l-3 3.5z" fill="#5a5a5a"/></svg>
<svg class="a" style="left:1757px;top:70px;" width="28" height="27" viewBox="0 0 28 27"><circle cx="17" cy="10" r="8.5" fill="none" stroke="#3a78c3" stroke-width="2.5"/><path d="M11 16l-9 9" stroke="#3a78c3" stroke-width="3.5" stroke-linecap="round"/></svg>
<div class="a" style="top:102.0px;font-size:12px;line-height:16px;color:#262626;left:1470.5px;width:600px;text-align:center;">찾기 및</div>
<div class="a" style="top:118.5px;font-size:12px;line-height:16px;color:#262626;left:1466.0px;width:600px;text-align:center;">선택</div>
<svg class="a" style="left:1782px;top:125.5px;" width="6" height="4" viewBox="0 0 6 4"><path d="M0 0h6l-3 3.5z" fill="#5a5a5a"/></svg>
<svg class="a" style="left:1900px;top:144px;" width="10" height="6" viewBox="0 0 10 6"><path d="M0.5 5.5l4.5-4.5l4.5 4.5" fill="none" stroke="#555" stroke-width="1.4"/></svg>
<div class="a" style="left:4px;top:166px;width:192px;height:28px;box-sizing:border-box;border:1px solid #c6c6c6;background:#fff;"></div>
<div class="a" style="top:171.5px;font-size:13px;line-height:18px;color:#222;left:11.0px;">Y32</div>
<svg class="a" style="left:181px;top:177px;" width="8" height="5" viewBox="0 0 8 5"><path d="M0 0h8l-4 4.5z" fill="#6d6d6d"/></svg>
<div class="a" style="left:210px;top:175px;width:2px;height:2px;background:#9a9a9a;"></div>
<div class="a" style="left:210px;top:178.5px;width:2px;height:2px;background:#9a9a9a;"></div>
<div class="a" style="left:210px;top:182.5px;width:2px;height:2px;background:#9a9a9a;"></div>
<div class="a" style="left:226px;top:166px;width:110px;height:28px;box-sizing:border-box;border:1px solid #c6c6c6;background:#fff;"></div>
<svg class="a" style="left:240px;top:174px;" width="11" height="11" viewBox="0 0 11 11"><path d="M0.5 0.5l10 10M10.5 0.5l-10 10" stroke="#c4c4c4" stroke-width="1.6"/></svg>
<svg class="a" style="left:275px;top:174px;" width="13" height="11" viewBox="0 0 13 11"><path d="M0.5 6l4 4l8-9" fill="none" stroke="#c4c4c4" stroke-width="2.3"/></svg>
<div class="a" style="top:169.5px;font-size:14px;line-height:19px;color:#444;font-weight:bold;font-family:'Liberation Serif',serif;left:311.0px;"><i>f</i><span style="font-size:10px"><i>x</i></span></div>
<div class="a" style="left:339px;top:166px;width:1575px;height:28px;box-sizing:border-box;border:1px solid #c6c6c6;background:#fff;"></div>
<svg class="a" style="left:1902px;top:176px;" width="8" height="6" viewBox="0 0 8 6"><path d="M0.5 0.5l3.5 3.5l3.5-3.5" fill="none" stroke="#555" stroke-width="1.5"/></svg>
<svg class="a" style="left:15px;top:208px;" width="14" height="14" viewBox="0 0 14 14"><path d="M14 0v14h-14z" fill="#b4b4b4"/></svg>
<div class="a" style="left:32px;top:204px;width:1px;height:21px;background:#c6c6c6;"></div>
<div class="a" style="top:205.0px;font-size:12.5px;line-height:17px;color:#222;left:-258.0px;width:600px;text-align:center;">A</div>
<div class="a" style="left:52px;top:204px;width:1px;height:21px;background:#c6c6c6;"></div>
<div class="a" style="top:205.0px;font-size:12.5px;line-height:17px;color:#222;left:-235.5px;width:600px;text-align:center;">B</div>
<div class="a" style="left:77px;top:204px;width:1px;height:21px;background:#c6c6c6;"></div>
<div class="a" style="top:205.0px;font-size:12.5px;line-height:17px;color:#222;left:-157.0px;width:600px;text-align:center;">C</div>
<div class="a" style="left:209px;top:204px;width:1px;height:21px;background:#c6c6c6;"></div>
<div class="a" style="top:205.0px;font-size:12.5px;line-height:17px;color:#222;left:-38.5px;width:600px;text-align:center;">D</div>
<div class="a" style="left:314px;top:204px;width:1px;height:21px;background:#c6c6c6;"></div>
<div class="a" style="top:205.0px;font-size:12.5px;line-height:17px;color:#222;left:66.5px;width:600px;text-align:center;">E</div>
<div class="a" style="left:419px;top:204px;width:1px;height:21px;background:#c6c6c6;"></div>
<div class="a" style="top:205.0px;font-size:12.5px;line-height:17px;color:#222;left:171.5px;width:600px;text-align:center;">F</div>
<div class="a" style="left:524px;top:204px;width:1px;height:21px;background:#c6c6c6;"></div>
<div class="a" style="top:205.0px;font-size:12.5px;line-height:17px;color:#222;left:276.5px;width:600px;text-align:center;">G</div>
<div class="a" style="left:629px;top:204px;width:1px;height:21px;background:#c6c6c6;"></div>
<div class="a" style="top:205.0px;font-size:12.5px;line-height:17px;color:#222;left:381.5px;width:600px;text-align:center;">H</div>
<div class="a" style="left:734px;top:204px;width:1px;height:21px;background:#c6c6c6;"></div>
<div class="a" style="top:205.0px;font-size:12.5px;line-height:17px;color:#222;left:486.5px;width:600px;text-align:center;">I</div>
<div class="a" style="left:839px;top:204px;width:1px;height:21px;background:#c6c6c6;"></div>
<div class="a" style="top:205.0px;font-size:12.5px;line-height:17px;color:#222;left:591.5px;width:600px;text-align:center;">J</div>
<div class="a" style="left:944px;top:204px;width:1px;height:21px;background:#c6c6c6;"></div>
<div class="a" style="top:205.0px;font-size:12.5px;line-height:17px;color:#222;left:696.5px;width:600px;text-align:center;">K</div>
<div class="a" style="left:1049px;top:204px;width:1px;height:21px;background:#c6c6c6;"></div>
<div class="a" style="top:205.0px;font-size:12.5px;line-height:17px;color:#222;left:801.5px;width:600px;text-align:center;">L</div>
<div class="a" style="left:1154px;top:204px;width:1px;height:21px;background:#c6c6c6;"></div>
<div class="a" style="top:205.0px;font-size:12.5px;line-height:17px;color:#222;left:906.5px;width:600px;text-align:center;">M</div>
<div class="a" style="left:1259px;top:204px;width:1px;height:21px;background:#c6c6c6;"></div>
<div class="a" style="top:205.0px;font-size:12.5px;line-height:17px;color:#222;left:1011.5px;width:600px;text-align:center;">N</div>
<div class="a" style="left:1364px;top:204px;width:1px;height:21px;background:#c6c6c6;"></div>
<div class="a" style="top:205.0px;font-size:12.5px;line-height:17px;color:#222;left:1116.5px;width:600px;text-align:center;">O</div>
<div class="a" style="left:1469px;top:204px;width:1px;height:21px;background:#c6c6c6;"></div>
<div class="a" style="top:205.0px;font-size:12.5px;line-height:17px;color:#222;left:1221.5px;width:600px;text-align:center;">P</div>
<div class="a" style="left:1574px;top:204px;width:1px;height:21px;background:#c6c6c6;"></div>
<div class="a" style="top:205.0px;font-size:12.5px;line-height:17px;color:#222;left:1310.0px;width:600px;text-align:center;">Q</div>
<div class="a" style="left:1646px;top:204px;width:1px;height:21px;background:#c6c6c6;"></div>
<div class="a" style="top:205.0px;font-size:12.5px;line-height:17px;color:#222;left:1382.0px;width:600px;text-align:center;">R</div>
<div class="a" style="left:1718px;top:204px;width:1px;height:21px;background:#c6c6c6;"></div>
<div class="a" style="top:205.0px;font-size:12.5px;line-height:17px;color:#222;left:1454.0px;width:600px;text-align:center;">S</div>
<div class="a" style="left:1790px;top:204px;width:1px;height:21px;background:#c6c6c6;"></div>
<div class="a" style="top:205.0px;font-size:12.5px;line-height:17px;color:#222;left:1526.0px;width:600px;text-align:center;">T</div>
<div class="a" style="left:1862px;top:204px;width:1px;height:21px;background:#c6c6c6;"></div>
<div class="a" style="top:205.0px;font-size:12.5px;line-height:17px;color:#222;left:1598.0px;width:600px;text-align:center;">U</div>
<div class="a" style="left:1862px;top:204px;width:1px;height:21px;background:#c6c6c6;"></div>
<div class="a" style="left:0px;top:225px;width:1898px;height:1px;background:#ababab;"></div>
<div class="a" style="left:32px;top:204px;width:1px;height:775px;background:#ababab;"></div>
<div class="a" style="left:0px;top:251px;width:32px;height:1px;background:#c6c6c6;"></div>
<div class="a" style="top:233.8px;font-size:12.5px;line-height:17px;color:#222;left:-283.5px;width:600px;text-align:center;">1</div>
<div class="a" style="left:0px;top:296px;width:32px;height:1px;background:#c6c6c6;"></div>
<div class="a" style="top:278.8px;font-size:12.5px;line-height:17px;color:#222;left:-283.5px;width:600px;text-align:center;">2</div>
<div class="a" style="left:0px;top:318px;width:32px;height:1px;background:#c6c6c6;"></div>
<div class="a" style="top:300.8px;font-size:12.5px;line-height:17px;color:#222;left:-283.5px;width:600px;text-align:center;">3</div>
<div class="a" style="left:0px;top:340px;width:32px;height:1px;background:#c6c6c6;"></div>
<div class="a" style="top:322.8px;font-size:12.5px;line-height:17px;color:#222;left:-283.5px;width:600px;text-align:center;">4</div>
<div class="a" style="left:0px;top:362px;width:32px;height:1px;background:#c6c6c6;"></div>
<div class="a" style="top:344.8px;font-size:12.5px;line-height:17px;color:#222;left:-283.5px;width:600px;text-align:center;">5</div>
<div class="a" style="left:0px;top:384px;width:32px;height:1px;background:#c6c6c6;"></div>
<div class="a" style="top:366.8px;font-size:12.5px;line-height:17px;color:#222;left:-283.5px;width:600px;text-align:center;">6</div>
<div class="a" style="left:0px;top:406px;width:32px;height:1px;background:#c6c6c6;"></div>
<div class="a" style="top:388.8px;font-size:12.5px;line-height:17px;color:#222;left:-283.5px;width:600px;text-align:center;">7</div>
<div class="a" style="left:0px;top:428px;width:32px;height:1px;background:#c6c6c6;"></div>
<div class="a" style="top:410.8px;font-size:12.5px;line-height:17px;color:#222;left:-283.5px;width:600px;text-align:center;">8</div>
<div class="a" style="left:0px;top:450px;width:32px;height:1px;background:#c6c6c6;"></div>
<div class="a" style="top:432.8px;font-size:12.5px;line-height:17px;color:#222;left:-283.5px;width:600px;text-align:center;">9</div>
<div class="a" style="left:0px;top:472px;width:32px;height:1px;background:#c6c6c6;"></div>
<div class="a" style="top:454.8px;font-size:12.5px;line-height:17px;color:#222;left:-283.5px;width:600px;text-align:center;">10</div>
<div class="a" style="left:0px;top:494px;width:32px;height:1px;background:#c6c6c6;"></div>
<div class="a" style="top:476.8px;font-size:12.5px;line-height:17px;color:#222;left:-283.5px;width:600px;text-align:center;">11</div>
<div class="a" style="left:0px;top:510px;width:32px;height:1px;background:#c6c6c6;"></div>
<div class="a" style="top:492.8px;font-size:12.5px;line-height:17px;color:#222;left:-283.5px;width:600px;text-align:center;">12</div>
<div class="a" style="left:0px;top:539px;width:32px;height:1px;background:#c6c6c6;"></div>
<div class="a" style="top:521.8px;font-size:12.5px;line-height:17px;color:#222;left:-283.5px;width:600px;text-align:center;">13</div>
<div class="a" style="left:0px;top:566px;width:32px;height:1px;background:#c6c6c6;"></div>
<div class="a" style="top:548.8px;font-size:12.5px;line-height:17px;color:#222;left:-283.5px;width:600px;text-align:center;">14</div>
<div class="a" style="left:0px;top:592px;width:32px;height:1px;background:#c6c6c6;"></div>
<div class="a" style="top:574.8px;font-size:12.5px;line-height:17px;color:#222;left:-283.5px;width:600px;text-align:center;">15</div>
<div class="a" style="left:0px;top:618px;width:32px;height:1px;background:#c6c6c6;"></div>
<div class="a" style="top:600.8px;font-size:12.5px;line-height:17px;color:#222;left:-283.5px;width:600px;text-align:center;">16</div>
<div class="a" style="left:0px;top:644px;width:32px;height:1px;background:#c6c6c6;"></div>
<div class="a" style="top:626.8px;font-size:12.5px;line-height:17px;color:#222;left:-283.5px;width:600px;text-align:center;">17</div>
<div class="a" style="left:0px;top:670px;width:32px;height:1px;background:#c6c6c6;"></div>
<div class="a" style="top:652.8px;font-size:12.5px;line-height:17px;color:#222;left:-283.5px;width:600px;text-align:center;">18</div>
<div class="a" style="left:0px;top:696px;width:32px;height:1px;background:#c6c6c6;"></div>
<div class="a" style="top:678.8px;font-size:12.5px;line-height:17px;color:#222;left:-283.5px;width:600px;text-align:center;">19</div>
<div class="a" style="left:0px;top:722px;width:32px;height:1px;background:#c6c6c6;"></div>
<div class="a" style="top:704.8px;font-size:12.5px;line-height:17px;color:#222;left:-283.5px;width:600px;text-align:center;">20</div>
<div class="a" style="left:0px;top:748px;width:32px;height:1px;background:#c6c6c6;"></div>
<div class="a" style="top:730.8px;font-size:12.5px;line-height:17px;color:#222;left:-283.5px;width:600px;text-align:center;">21</div>
<div class="a" style="left:0px;top:774px;width:32px;height:1px;background:#c6c6c6;"></div>
<div class="a" style="top:756.8px;font-size:12.5px;line-height:17px;color:#222;left:-283.5px;width:600px;text-align:center;">22</div>
<div class="a" style="left:0px;top:800px;width:32px;height:1px;background:#c6c6c6;"></div>
<div class="a" style="top:782.8px;font-size:12.5px;line-height:17px;color:#222;left:-283.5px;width:600px;text-align:center;">23</div>
<div class="a" style="left:0px;top:826px;width:32px;height:1px;background:#c6c6c6;"></div>
<div class="a" style="top:808.8px;font-size:12.5px;line-height:17px;color:#222;left:-283.5px;width:600px;text-align:center;">24</div>
<div class="a" style="left:0px;top:852px;width:32px;height:1px;background:#c6c6c6;"></div>
<div class="a" style="top:834.8px;font-size:12.5px;line-height:17px;color:#222;left:-283.5px;width:600px;text-align:center;">25</div>
<div class="a" style="left:0px;top:878px;width:32px;height:1px;background:#c6c6c6;"></div>
<div class="a" style="top:860.8px;font-size:12.5px;line-height:17px;color:#222;left:-283.5px;width:600px;text-align:center;">26</div>
<div class="a" style="left:0px;top:904px;width:32px;height:1px;background:#c6c6c6;"></div>
<div class="a" style="top:886.8px;font-size:12.5px;line-height:17px;color:#222;left:-283.5px;width:600px;text-align:center;">27</div>
<div class="a" style="left:0px;top:930px;width:32px;height:1px;background:#c6c6c6;"></div>
<div class="a" style="top:912.8px;font-size:12.5px;line-height:17px;color:#222;left:-283.5px;width:600px;text-align:center;">28</div>
<div class="a" style="left:0px;top:956px;width:32px;height:1px;background:#c6c6c6;"></div>
<div class="a" style="top:938.8px;font-size:12.5px;line-height:17px;color:#222;left:-283.5px;width:600px;text-align:center;">29</div>
<div class="a" style="left:0px;top:978px;width:32px;height:1px;background:#c6c6c6;"></div>
<div class="a" style="top:960.8px;font-size:12.5px;line-height:17px;color:#222;left:-283.5px;width:600px;text-align:center;">30</div>
<div class="a" style="left:1897px;top:225px;width:1px;height:755px;background:#a0a0a0;"></div>
<div class="a" style="left:1899px;top:204px;width:17px;height:775px;background:#e6e6e6;"></div>
<div class="a" style="left:1901px;top:207px;width:14px;height:14px;box-sizing:border-box;border:1px solid #ababab;background:#fff;"></div>
<svg class="a" style="left:1904px;top:212px;" width="8" height="5" viewBox="0 0 8 5"><path d="M0 4.5h8l-4-4.5z" fill="#666"/></svg>
<div class="a" style="left:1901px;top:221px;width:14px;height:746px;background:#dadada;"></div>
<div class="a" style="left:1901px;top:221px;width:14px;height:720px;box-sizing:border-box;border:1px solid #ababab;background:#fff;"></div>
<div class="a" style="left:1901px;top:967px;width:14px;height:14px;box-sizing:border-box;border:1px solid #ababab;background:#fff;"></div>
<svg class="a" style="left:1904px;top:972px;" width="8" height="5" viewBox="0 0 8 5"><path d="M0 0h8l-4 4.5z" fill="#666"/></svg>
<div class="a" style="top:227.2px;font-size:15.5px;line-height:21px;color:#595959;font-weight:bold;left:57.0px;">당기순이익</div>
<div class="a" style="top:230.5px;font-size:12px;line-height:16px;color:#7f7f7f;right:1457.5px;">(단위 : 백만원)</div>
<div class="a" style="top:253.0px;font-size:28px;line-height:39px;color:#262626;font-weight:bold;left:58.0px;letter-spacing:1.35px;">89,032</div>
<svg class="a" style="left:0px;top:0px;" width="1" height="1" viewBox="0 0 1 1"><rect x="63.5" y="439.5" width="383" height="1" fill="#d9d9d9"/><rect x="71" y="342.2" width="7" height="97.3" fill="#303030"/><rect x="80" y="341.0" width="7" height="98.5" fill="#3c95e6"/><rect x="103" y="346.3" width="7" height="93.2" fill="#303030"/><rect x="112" y="342.7" width="7" height="96.8" fill="#3c95e6"/><rect x="135" y="330.5" width="7" height="109.0" fill="#303030"/><rect x="144" y="342.0" width="7" height="97.5" fill="#3c95e6"/><rect x="167" y="316.3" width="7" height="123.2" fill="#303030"/><rect x="176" y="318.0" width="7" height="121.5" fill="#3c95e6"/><rect x="199" y="349.0" width="7" height="90.5" fill="#303030"/><rect x="208" y="389.1" width="7" height="50.4" fill="#3c95e6"/><rect x="231" y="321.1" width="7" height="118.4" fill="#303030"/><rect x="240" y="351.2" width="7" height="88.3" fill="#3c95e6"/><rect x="263" y="330.5" width="7" height="109.0" fill="#303030"/><rect x="272" y="358.1" width="7" height="81.4" fill="#3c95e6"/><rect x="295" y="357.5" width="7" height="82.0" fill="#303030"/><rect x="304" y="372.2" width="7" height="67.3" fill="#3c95e6"/><rect x="327" y="351.4" width="7" height="88.1" fill="#303030"/><rect x="336" y="363.0" width="7" height="76.5" fill="#3c95e6"/><rect x="359" y="332.4" width="7" height="107.1" fill="#303030"/><rect x="368" y="329.4" width="7" height="110.1" fill="#3c95e6"/><rect x="391" y="314.5" width="7" height="125.0" fill="#303030"/><rect x="400" y="342.6" width="7" height="96.9" fill="#3c95e6"/><rect x="423" y="322.4" width="7" height="117.1" fill="#303030"/><rect x="432" y="305.5" width="7" height="134.0" fill="#3c95e6"/><polyline points="79,330.1 111,327.2 143,342.7 175,332.8 207,378.9 239,358.7 271,358.6 303,350.6 335,345.5 367,328.4 399,355.6 431,315.9" fill="none" stroke="#ffb900" stroke-width="3" stroke-linejoin="round"/><circle cx="79" cy="330.1" r="3.9" fill="#fff" stroke="#ffb900" stroke-width="2.4"/><circle cx="111" cy="327.2" r="3.9" fill="#fff" stroke="#ffb900" stroke-width="2.4"/><circle cx="143" cy="342.7" r="3.9" fill="#fff" stroke="#ffb900" stroke-width="2.4"/><circle cx="175" cy="332.8" r="3.9" fill="#fff" stroke="#ffb900" stroke-width="2.4"/><circle cx="207" cy="378.9" r="3.9" fill="#fff" stroke="#ffb900" stroke-width="2.4"/><circle cx="239" cy="358.7" r="3.9" fill="#fff" stroke="#ffb900" stroke-width="2.4"/><circle cx="271" cy="358.6" r="3.9" fill="#fff" stroke="#ffb900" stroke-width="2.4"/><circle cx="303" cy="350.6" r="3.9" fill="#fff" stroke="#ffb900" stroke-width="2.4"/><circle cx="335" cy="345.5" r="3.9" fill="#fff" stroke="#ffb900" stroke-width="2.4"/><circle cx="367" cy="328.4" r="3.9" fill="#fff" stroke="#ffb900" stroke-width="2.4"/><circle cx="399" cy="355.6" r="3.9" fill="#fff" stroke="#ffb900" stroke-width="2.4"/><circle cx="431" cy="315.9" r="3.9" fill="#fff" stroke="#ffb900" stroke-width="2.4"/></svg>
<div class="a" style="top:450.0px;font-size:12px;line-height:16px;color:#8d9ab0;left:-221.0px;width:600px;text-align:center;">1월</div>
<div class="a" style="top:450.0px;font-size:12px;line-height:16px;color:#8d9ab0;left:-189.0px;width:600px;text-align:center;">2월</div>
<div class="a" style="top:450.0px;font-size:12px;line-height:16px;color:#8d9ab0;left:-157.0px;width:600px;text-align:center;">3월</div>
<div class="a" style="top:450.0px;font-size:12px;line-height:16px;color:#8d9ab0;left:-125.0px;width:600px;text-align:center;">4월</div>
<div class="a" style="top:450.0px;font-size:12px;line-height:16px;color:#8d9ab0;left:-93.0px;width:600px;text-align:center;">5월</div>
<div class="a" style="top:450.0px;font-size:12px;line-height:16px;color:#8d9ab0;left:-61.0px;width:600px;text-align:center;">6월</div>
<div class="a" style="top:450.0px;font-size:12px;line-height:16px;color:#8d9ab0;left:-29.0px;width:600px;text-align:center;">7월</div>
<div class="a" style="top:450.0px;font-size:12px;line-height:16px;color:#8d9ab0;left:3.0px;width:600px;text-align:center;">8월</div>
<div class="a" style="top:450.0px;font-size:12px;line-height:16px;color:#8d9ab0;left:35.0px;width:600px;text-align:center;">9월</div>
<div class="a" style="top:450.0px;font-size:12px;line-height:16px;color:#8d9ab0;left:67.0px;width:600px;text-align:center;">10월</div>
<div class="a" style="top:450.0px;font-size:12px;line-height:16px;color:#8d9ab0;left:99.0px;width:600px;text-align:center;">11월</div>
<div class="a" style="top:450.0px;font-size:12px;line-height:16px;color:#8d9ab0;left:131.0px;width:600px;text-align:center;">12월</div>
<div class="a" style="left:127px;top:484px;width:26px;height:7px;background:#303030;"></div>
<div class="a" style="top:478.5px;font-size:12px;line-height:16px;color:#595959;left:155.5px;">매출액</div>
<div class="a" style="left:207px;top:484px;width:26px;height:7px;background:#3c95e6;"></div>
<div class="a" style="top:478.5px;font-size:12px;line-height:16px;color:#595959;left:235.0px;">당기순이익</div>
<svg class="a" style="left:310px;top:480px;" width="28" height="14" viewBox="0 0 28 14"><path d="M0 7h27" stroke="#ffb900" stroke-width="3"/><circle cx="13.5" cy="7" r="3.9" fill="#fff" stroke="#ffb900" stroke-width="2.4"/></svg>
<div class="a" style="top:478.5px;font-size:12px;line-height:16px;color:#595959;left:339.0px;">순이익률</div>
<div class="a" style="top:227.2px;font-size:15.5px;line-height:21px;color:#595959;font-weight:bold;left:529.0px;">매출액</div>
<div class="a" style="top:230.5px;font-size:12px;line-height:16px;color:#7f7f7f;right:974.2px;">(단위 : 백만원)</div>
<div class="a" style="top:253.0px;font-size:28px;line-height:39px;color:#262626;font-weight:bold;left:531.0px;letter-spacing:0.95px;">100,241</div>
<svg class="a" style="left:0px;top:0px;" width="1" height="1" viewBox="0 0 1 1"><rect x="534.5" y="439.5" width="384" height="1" fill="#d9d9d9"/><rect x="544" y="407.46" width="13" height="32.04" fill="#27cc9c"/><rect x="544" y="374.37" width="13" height="33.08" fill="#3e97e6"/><rect x="544" y="342.20" width="13" height="32.18" fill="#3e3f66"/><rect x="576" y="408.51" width="13" height="30.99" fill="#27cc9c"/><rect x="576" y="377.82" width="13" height="30.70" fill="#3e97e6"/><rect x="576" y="346.33" width="13" height="31.49" fill="#3e3f66"/><rect x="608" y="408.02" width="13" height="31.48" fill="#27cc9c"/><rect x="608" y="383.31" width="13" height="24.71" fill="#3e97e6"/><rect x="608" y="330.53" width="13" height="52.78" fill="#3e3f66"/><rect x="640" y="407.32" width="13" height="32.18" fill="#27cc9c"/><rect x="640" y="386.86" width="13" height="20.46" fill="#3e97e6"/><rect x="640" y="316.28" width="13" height="70.58" fill="#3e3f66"/><rect x="672" y="410.07" width="13" height="29.43" fill="#27cc9c"/><rect x="672" y="384.20" width="13" height="25.87" fill="#3e97e6"/><rect x="672" y="349.05" width="13" height="35.16" fill="#3e3f66"/><rect x="704" y="408.40" width="13" height="31.10" fill="#27cc9c"/><rect x="704" y="380.72" width="13" height="27.68" fill="#3e97e6"/><rect x="704" y="321.07" width="13" height="59.66" fill="#3e3f66"/><rect x="736" y="411.73" width="13" height="27.77" fill="#27cc9c"/><rect x="736" y="391.41" width="13" height="20.33" fill="#3e97e6"/><rect x="736" y="330.48" width="13" height="60.93" fill="#3e3f66"/><rect x="768" y="412.31" width="13" height="27.19" fill="#27cc9c"/><rect x="768" y="388.18" width="13" height="24.13" fill="#3e97e6"/><rect x="768" y="357.49" width="13" height="30.68" fill="#3e3f66"/><rect x="800" y="410.48" width="13" height="29.02" fill="#27cc9c"/><rect x="800" y="391.61" width="13" height="18.87" fill="#3e97e6"/><rect x="800" y="351.37" width="13" height="40.24" fill="#3e3f66"/><rect x="832" y="412.44" width="13" height="27.06" fill="#27cc9c"/><rect x="832" y="384.48" width="13" height="27.96" fill="#3e97e6"/><rect x="832" y="332.38" width="13" height="52.10" fill="#3e3f66"/><rect x="864" y="409.96" width="13" height="29.54" fill="#27cc9c"/><rect x="864" y="386.24" width="13" height="23.72" fill="#3e97e6"/><rect x="864" y="314.45" width="13" height="71.79" fill="#3e3f66"/><rect x="896" y="413.53" width="13" height="25.97" fill="#27cc9c"/><rect x="896" y="391.19" width="13" height="22.34" fill="#3e97e6"/><rect x="896" y="322.40" width="13" height="68.80" fill="#3e3f66"/></svg>
<div class="a" style="top:450.0px;font-size:12px;line-height:16px;color:#8d9ab0;left:250.5px;width:600px;text-align:center;">1월</div>
<div class="a" style="top:450.0px;font-size:12px;line-height:16px;color:#8d9ab0;left:282.5px;width:600px;text-align:center;">2월</div>
<div class="a" style="top:450.0px;font-size:12px;line-height:16px;color:#8d9ab0;left:314.5px;width:600px;text-align:center;">3월</div>
<div class="a" style="top:450.0px;font-size:12px;line-height:16px;color:#8d9ab0;left:346.5px;width:600px;text-align:center;">4월</div>
<div class="a" style="top:450.0px;font-size:12px;line-height:16px;color:#8d9ab0;left:378.5px;width:600px;text-align:center;">5월</div>
<div class="a" style="top:450.0px;font-size:12px;line-height:16px;color:#8d9ab0;left:410.5px;width:600px;text-align:center;">6월</div>
<div class="a" style="top:450.0px;font-size:12px;line-height:16px;color:#8d9ab0;left:442.5px;width:600px;text-align:center;">7월</div>
<div class="a" style="top:450.0px;font-size:12px;line-height:16px;color:#8d9ab0;left:474.5px;width:600px;text-align:center;">8월</div>
<div class="a" style="top:450.0px;font-size:12px;line-height:16px;color:#8d9ab0;left:506.5px;width:600px;text-align:center;">9월</div>
<div class="a" style="top:450.0px;font-size:12px;line-height:16px;color:#8d9ab0;left:538.5px;width:600px;text-align:center;">10월</div>
<div class="a" style="top:450.0px;font-size:12px;line-height:16px;color:#8d9ab0;left:570.5px;width:600px;text-align:center;">11월</div>
<div class="a" style="top:450.0px;font-size:12px;line-height:16px;color:#8d9ab0;left:602.5px;width:600px;text-align:center;">12월</div>
<div class="a" style="left:637px;top:484px;width:6px;height:7px;background:#27cc9c;"></div>
<div class="a" style="top:478.5px;font-size:12px;line-height:16px;color:#595959;left:646.5px;">매출원가</div>
<div class="a" style="left:706px;top:484px;width:6px;height:7px;background:#3e97e6;"></div>
<div class="a" style="top:478.5px;font-size:12px;line-height:16px;color:#595959;left:715.5px;">판관비</div>
<div class="a" style="left:764px;top:484px;width:6px;height:7px;background:#3e3f66;"></div>
<div class="a" style="top:478.5px;font-size:12px;line-height:16px;color:#595959;left:774.0px;">영업이익</div>
<div class="a" style="top:227.0px;font-size:15.5px;line-height:21px;color:#595959;font-weight:bold;left:993.5px;">주요이익률 지표</div>
<svg class="a" style="left:0px;top:0px;" width="1" height="1" viewBox="0 0 1 1"><path d="M1082.80 269.00A77 77 0 1 1 1007.16 360.43L1036.63 354.81A47 47 0 1 0 1082.80 299.00Z" fill="#2a94f4" stroke="#fff" stroke-width="1.5"/><path d="M1007.16 360.43A77 77 0 0 1 1082.80 269.00L1082.80 299.00A47 47 0 0 0 1036.63 354.81Z" fill="#d6dce6" stroke="#fff" stroke-width="1.5"/><path d="M1282.20 269.00A77 77 0 0 1 1291.85 422.39L1288.09 392.63A47 47 0 0 0 1282.20 299.00Z" fill="#27cd9d" stroke="#fff" stroke-width="1.5"/><path d="M1291.85 422.39A77 77 0 1 1 1282.20 269.00L1282.20 299.00A47 47 0 1 0 1288.09 392.63Z" fill="#d6dce6" stroke="#fff" stroke-width="1.5"/><path d="M1485.00 269.00A77 77 0 1 1 1435.92 286.67L1455.04 309.79A47 47 0 1 0 1485.00 299.00Z" fill="#fdb16a" stroke="#fff" stroke-width="1.5"/><path d="M1435.92 286.67A77 77 0 0 1 1485.00 269.00L1485.00 299.00A47 47 0 0 0 1455.04 309.79Z" fill="#d6dce6" stroke="#fff" stroke-width="1.5"/></svg>
<div class="a" style="top:328.0px;font-size:24px;line-height:33px;color:#111;font-weight:bold;left:782.8px;width:600px;text-align:center;">72%</div>
<div class="a" style="top:431.0px;font-size:14px;line-height:19px;color:#595959;font-weight:bold;left:783.0px;width:600px;text-align:center;">매출총이익률</div>
<div class="a" style="top:328.0px;font-size:24px;line-height:33px;color:#111;font-weight:bold;left:982.2px;width:600px;text-align:center;">48%</div>
<div class="a" style="top:431.0px;font-size:14px;line-height:19px;color:#595959;font-weight:bold;left:986.0px;width:600px;text-align:center;">영업이익률</div>
<div class="a" style="top:328.0px;font-size:24px;line-height:33px;color:#111;font-weight:bold;left:1185.0px;width:600px;text-align:center;">89%</div>
<div class="a" style="top:431.0px;font-size:14px;line-height:19px;color:#595959;font-weight:bold;left:1188.7px;width:600px;text-align:center;">순이익률</div>
<div class="a" style="top:510.5px;font-size:15.5px;line-height:21px;color:#595959;font-weight:bold;left:56.5px;">월별 상세</div>
<div class="a" style="top:516.5px;font-size:12px;line-height:16px;color:#7f7f7f;right:344.4px;">(단위 : 백만원)</div>
<div class="a" style="left:52px;top:538px;width:1522px;height:2px;background:#56699a;"></div>
<div class="a" style="left:52px;top:540px;width:157px;height:26px;background:#8597b8;"></div>
<div class="a" style="top:542.5px;font-size:13px;line-height:18px;color:#fff;left:70.5px;">항목</div>
<div class="a" style="left:209px;top:540px;width:105px;height:26px;background:#eef1f5;"></div>
<div class="a" style="top:543.5px;font-size:13px;line-height:18px;color:#7d7d7d;left:-38.5px;width:600px;text-align:center;">1월</div>
<div class="a" style="left:314px;top:540px;width:105px;height:26px;background:#e3e7ec;"></div>
<div class="a" style="top:543.5px;font-size:13px;line-height:18px;color:#7d7d7d;left:66.5px;width:600px;text-align:center;">2월</div>
<div class="a" style="left:419px;top:540px;width:105px;height:26px;background:#eef1f5;"></div>
<div class="a" style="top:543.5px;font-size:13px;line-height:18px;color:#7d7d7d;left:171.5px;width:600px;text-align:center;">3월</div>
<div class="a" style="left:524px;top:540px;width:105px;height:26px;background:#e3e7ec;"></div>
<div class="a" style="top:543.5px;font-size:13px;line-height:18px;color:#7d7d7d;left:276.5px;width:600px;text-align:center;">4월</div>
<div class="a" style="left:629px;top:540px;width:105px;height:26px;background:#eef1f5;"></div>
<div class="a" style="top:543.5px;font-size:13px;line-height:18px;color:#7d7d7d;left:381.5px;width:600px;text-align:center;">5월</div>
<div class="a" style="left:734px;top:540px;width:105px;height:26px;background:#e3e7ec;"></div>
<div class="a" style="top:543.5px;font-size:13px;line-height:18px;color:#7d7d7d;left:486.5px;width:600px;text-align:center;">6월</div>
<div class="a" style="left:839px;top:540px;width:105px;height:26px;background:#eef1f5;"></div>
<div class="a" style="top:543.5px;font-size:13px;line-height:18px;color:#7d7d7d;left:591.5px;width:600px;text-align:center;">7월</div>
<div class="a" style="left:944px;top:540px;width:105px;height:26px;background:#e3e7ec;"></div>
<div class="a" style="top:543.5px;font-size:13px;line-height:18px;color:#7d7d7d;left:696.5px;width:600px;text-align:center;">8월</div>
<div class="a" style="left:1049px;top:540px;width:105px;height:26px;background:#eef1f5;"></div>
<div class="a" style="top:543.5px;font-size:13px;line-height:18px;color:#7d7d7d;left:801.5px;width:600px;text-align:center;">9월</div>
<div class="a" style="left:1154px;top:540px;width:105px;height:26px;background:#e3e7ec;"></div>
<div class="a" style="top:543.5px;font-size:13px;line-height:18px;color:#7d7d7d;left:906.5px;width:600px;text-align:center;">10월</div>
<div class="a" style="left:1259px;top:540px;width:105px;height:26px;background:#eef1f5;"></div>
<div class="a" style="top:543.5px;font-size:13px;line-height:18px;color:#7d7d7d;left:1011.5px;width:600px;text-align:center;">11월</div>
<div class="a" style="left:1364px;top:540px;width:105px;height:26px;background:#e3e7ec;"></div>
<div class="a" style="top:543.5px;font-size:13px;line-height:18px;color:#7d7d7d;left:1116.5px;width:600px;text-align:center;">12월</div>
<div class="a" style="left:1469px;top:540px;width:105px;height:26px;background:#eef1f5;"></div>
<div class="a" style="top:543.5px;font-size:13px;line-height:18px;color:#7d7d7d;left:1221.5px;width:600px;text-align:center;">합계</div>
<div class="a" style="top:570.0px;font-size:13px;line-height:18px;color:#767676;left:70.5px;">수익</div>
<div class="a" style="top:570.5px;font-size:13px;line-height:18px;color:#111;font-weight:bold;right:1619.0px;letter-spacing:0.2px;">15,425</div>
<div class="a" style="top:570.5px;font-size:13px;line-height:18px;color:#111;font-weight:bold;right:1514.0px;letter-spacing:0.2px;">14,571</div>
<div class="a" style="top:570.5px;font-size:13px;line-height:18px;color:#111;font-weight:bold;right:1409.0px;letter-spacing:0.2px;">15,320</div>
<div class="a" style="top:570.5px;font-size:13px;line-height:18px;color:#111;font-weight:bold;right:1304.0px;letter-spacing:0.2px;">16,470</div>
<div class="a" style="top:570.5px;font-size:13px;line-height:18px;color:#111;font-weight:bold;right:1199.0px;letter-spacing:0.2px;">11,472</div>
<div class="a" style="top:570.5px;font-size:13px;line-height:18px;color:#111;font-weight:bold;right:1094.0px;letter-spacing:0.2px;">14,821</div>
<div class="a" style="top:570.5px;font-size:13px;line-height:18px;color:#111;font-weight:bold;right:989.0px;letter-spacing:0.2px;">13,453</div>
<div class="a" style="top:570.5px;font-size:13px;line-height:18px;color:#111;font-weight:bold;right:884.0px;letter-spacing:0.2px;">12,628</div>
<div class="a" style="top:570.5px;font-size:13px;line-height:18px;color:#111;font-weight:bold;right:779.0px;letter-spacing:0.2px;">13,152</div>
<div class="a" style="top:570.5px;font-size:13px;line-height:18px;color:#111;font-weight:bold;right:674.0px;letter-spacing:0.2px;">15,767</div>
<div class="a" style="top:570.5px;font-size:13px;line-height:18px;color:#111;font-weight:bold;right:569.0px;letter-spacing:0.2px;">15,079</div>
<div class="a" style="top:570.5px;font-size:13px;line-height:18px;color:#111;font-weight:bold;right:464.0px;letter-spacing:0.2px;">16,991</div>
<div class="a" style="top:570.5px;font-size:13px;line-height:18px;color:#111;font-weight:bold;right:359.0px;letter-spacing:0.2px;">175,148</div>
<div class="a" style="left:52px;top:592px;width:1522px;height:1px;background:#e6e6ec;"></div>
<div class="a" style="top:596.0px;font-size:13px;line-height:18px;color:#767676;left:70.5px;">비용</div>
<div class="a" style="top:596.5px;font-size:13px;line-height:18px;color:#111;font-weight:bold;right:1619.0px;letter-spacing:0.2px;">7,590</div>
<div class="a" style="top:596.5px;font-size:13px;line-height:18px;color:#111;font-weight:bold;right:1514.0px;letter-spacing:0.2px;">6,872</div>
<div class="a" style="top:596.5px;font-size:13px;line-height:18px;color:#111;font-weight:bold;right:1409.0px;letter-spacing:0.2px;">7,561</div>
<div class="a" style="top:596.5px;font-size:13px;line-height:18px;color:#111;font-weight:bold;right:1304.0px;letter-spacing:0.2px;">6,801</div>
<div class="a" style="top:596.5px;font-size:13px;line-height:18px;color:#111;font-weight:bold;right:1199.0px;letter-spacing:0.2px;">7,461</div>
<div class="a" style="top:596.5px;font-size:13px;line-height:18px;color:#111;font-weight:bold;right:1094.0px;letter-spacing:0.2px;">7,797</div>
<div class="a" style="top:596.5px;font-size:13px;line-height:18px;color:#111;font-weight:bold;right:989.0px;letter-spacing:0.2px;">6,981</div>
<div class="a" style="top:596.5px;font-size:13px;line-height:18px;color:#111;font-weight:bold;right:884.0px;letter-spacing:0.2px;">7,271</div>
<div class="a" style="top:596.5px;font-size:13px;line-height:18px;color:#111;font-weight:bold;right:779.0px;letter-spacing:0.2px;">7,066</div>
<div class="a" style="top:596.5px;font-size:13px;line-height:18px;color:#111;font-weight:bold;right:674.0px;letter-spacing:0.2px;">7,012</div>
<div class="a" style="top:596.5px;font-size:13px;line-height:18px;color:#111;font-weight:bold;right:569.0px;letter-spacing:0.2px;">7,373</div>
<div class="a" style="top:596.5px;font-size:13px;line-height:18px;color:#111;font-weight:bold;right:464.0px;letter-spacing:0.2px;">6,331</div>
<div class="a" style="top:596.5px;font-size:13px;line-height:18px;color:#111;font-weight:bold;right:359.0px;letter-spacing:0.2px;">86,116</div>
<div class="a" style="left:52px;top:618px;width:1522px;height:1px;background:#e6e6ec;"></div>
<div class="a" style="top:622.0px;font-size:13px;line-height:18px;color:#767676;left:70.5px;">매출액</div>
<div class="a" style="top:623.8px;font-size:12.5px;line-height:17px;color:#767676;right:1619.0px;">7,741</div>
<div class="a" style="top:623.8px;font-size:12.5px;line-height:17px;color:#767676;right:1514.0px;">7,413</div>
<div class="a" style="top:623.8px;font-size:12.5px;line-height:17px;color:#767676;right:1409.0px;">8,670</div>
<div class="a" style="top:623.8px;font-size:12.5px;line-height:17px;color:#767676;right:1304.0px;">9,803</div>
<div class="a" style="top:623.8px;font-size:12.5px;line-height:17px;color:#767676;right:1199.0px;">7,196</div>
<div class="a" style="top:623.8px;font-size:12.5px;line-height:17px;color:#767676;right:1094.0px;">9,422</div>
<div class="a" style="top:623.8px;font-size:12.5px;line-height:17px;color:#767676;right:989.0px;">8,674</div>
<div class="a" style="top:623.8px;font-size:12.5px;line-height:17px;color:#767676;right:884.0px;">6,524</div>
<div class="a" style="top:623.8px;font-size:12.5px;line-height:17px;color:#767676;right:779.0px;">7,011</div>
<div class="a" style="top:623.8px;font-size:12.5px;line-height:17px;color:#767676;right:674.0px;">8,522</div>
<div class="a" style="top:623.8px;font-size:12.5px;line-height:17px;color:#767676;right:569.0px;">9,948</div>
<div class="a" style="top:623.8px;font-size:12.5px;line-height:17px;color:#767676;right:464.0px;">9,317</div>
<div class="a" style="top:623.8px;font-size:12.5px;line-height:17px;color:#767676;right:359.0px;">100,241</div>
<div class="a" style="left:52px;top:644px;width:1522px;height:1px;background:#e6e6ec;"></div>
<div class="a" style="top:648.0px;font-size:13px;line-height:18px;color:#767676;left:70.5px;">매출원가</div>
<div class="a" style="top:649.8px;font-size:12.5px;line-height:17px;color:#767676;right:1619.0px;">2,549</div>
<div class="a" style="top:649.8px;font-size:12.5px;line-height:17px;color:#767676;right:1514.0px;">2,465</div>
<div class="a" style="top:649.8px;font-size:12.5px;line-height:17px;color:#767676;right:1409.0px;">2,504</div>
<div class="a" style="top:649.8px;font-size:12.5px;line-height:17px;color:#767676;right:1304.0px;">2,560</div>
<div class="a" style="top:649.8px;font-size:12.5px;line-height:17px;color:#767676;right:1199.0px;">2,341</div>
<div class="a" style="top:649.8px;font-size:12.5px;line-height:17px;color:#767676;right:1094.0px;">2,474</div>
<div class="a" style="top:649.8px;font-size:12.5px;line-height:17px;color:#767676;right:989.0px;">2,209</div>
<div class="a" style="top:649.8px;font-size:12.5px;line-height:17px;color:#767676;right:884.0px;">2,163</div>
<div class="a" style="top:649.8px;font-size:12.5px;line-height:17px;color:#767676;right:779.0px;">2,309</div>
<div class="a" style="top:649.8px;font-size:12.5px;line-height:17px;color:#767676;right:674.0px;">2,153</div>
<div class="a" style="top:649.8px;font-size:12.5px;line-height:17px;color:#767676;right:569.0px;">2,350</div>
<div class="a" style="top:649.8px;font-size:12.5px;line-height:17px;color:#767676;right:464.0px;">2,066</div>
<div class="a" style="top:649.8px;font-size:12.5px;line-height:17px;color:#767676;right:359.0px;">28,145</div>
<div class="a" style="left:52px;top:670px;width:1522px;height:1px;background:#e6e6ec;"></div>
<div class="a" style="top:674.0px;font-size:13px;line-height:18px;color:#767676;left:70.5px;">매출총이익</div>
<div class="a" style="top:674.5px;font-size:13px;line-height:18px;color:#111;font-weight:bold;right:1619.0px;letter-spacing:0.2px;">5,192</div>
<div class="a" style="top:674.5px;font-size:13px;line-height:18px;color:#111;font-weight:bold;right:1514.0px;letter-spacing:0.2px;">4,947</div>
<div class="a" style="top:674.5px;font-size:13px;line-height:18px;color:#111;font-weight:bold;right:1409.0px;letter-spacing:0.2px;">6,166</div>
<div class="a" style="top:674.5px;font-size:13px;line-height:18px;color:#111;font-weight:bold;right:1304.0px;letter-spacing:0.2px;">7,243</div>
<div class="a" style="top:674.5px;font-size:13px;line-height:18px;color:#111;font-weight:bold;right:1199.0px;letter-spacing:0.2px;">4,855</div>
<div class="a" style="top:674.5px;font-size:13px;line-height:18px;color:#111;font-weight:bold;right:1094.0px;letter-spacing:0.2px;">6,948</div>
<div class="a" style="top:674.5px;font-size:13px;line-height:18px;color:#111;font-weight:bold;right:989.0px;letter-spacing:0.2px;">6,465</div>
<div class="a" style="top:674.5px;font-size:13px;line-height:18px;color:#111;font-weight:bold;right:884.0px;letter-spacing:0.2px;">4,360</div>
<div class="a" style="top:674.5px;font-size:13px;line-height:18px;color:#111;font-weight:bold;right:779.0px;letter-spacing:0.2px;">4,702</div>
<div class="a" style="top:674.5px;font-size:13px;line-height:18px;color:#111;font-weight:bold;right:674.0px;letter-spacing:0.2px;">6,369</div>
<div class="a" style="top:674.5px;font-size:13px;line-height:18px;color:#111;font-weight:bold;right:569.0px;letter-spacing:0.2px;">7,598</div>
<div class="a" style="top:674.5px;font-size:13px;line-height:18px;color:#111;font-weight:bold;right:464.0px;letter-spacing:0.2px;">7,251</div>
<div class="a" style="top:674.5px;font-size:13px;line-height:18px;color:#111;font-weight:bold;right:359.0px;letter-spacing:0.2px;">72,096</div>
<div class="a" style="left:52px;top:697px;width:1522px;height:25px;background:#edf3fc;"></div>
<div class="a" style="left:52px;top:696px;width:1522px;height:1px;background:#d5dff0;"></div>
<div class="a" style="top:701.0px;font-size:12.5px;line-height:17px;color:#202a78;font-weight:bold;left:80.0px;">매출총이익률</div>
<div class="a" style="left:52px;top:722px;width:1522px;height:1px;background:#d5dff0;"></div>
<div class="a" style="top:700.5px;font-size:13.5px;line-height:18px;color:#202a78;font-weight:bold;right:1619.0px;">+67.07%</div>
<div class="a" style="top:700.5px;font-size:13.5px;line-height:18px;color:#202a78;font-weight:bold;right:1514.0px;">+66.74%</div>
<div class="a" style="top:700.5px;font-size:13.5px;line-height:18px;color:#202a78;font-weight:bold;right:1409.0px;">+71.12%</div>
<div class="a" style="top:700.5px;font-size:13.5px;line-height:18px;color:#202a78;font-weight:bold;right:1304.0px;">+73.89%</div>
<div class="a" style="top:700.5px;font-size:13.5px;line-height:18px;color:#202a78;font-weight:bold;right:1199.0px;">+67.47%</div>
<div class="a" style="top:700.5px;font-size:13.5px;line-height:18px;color:#202a78;font-weight:bold;right:1094.0px;">+73.74%</div>
<div class="a" style="top:700.5px;font-size:13.5px;line-height:18px;color:#202a78;font-weight:bold;right:989.0px;">+74.53%</div>
<div class="a" style="top:700.5px;font-size:13.5px;line-height:18px;color:#202a78;font-weight:bold;right:884.0px;">+66.84%</div>
<div class="a" style="top:700.5px;font-size:13.5px;line-height:18px;color:#202a78;font-weight:bold;right:779.0px;">+67.07%</div>
<div class="a" style="top:700.5px;font-size:13.5px;line-height:18px;color:#202a78;font-weight:bold;right:674.0px;">+74.73%</div>
<div class="a" style="top:700.5px;font-size:13.5px;line-height:18px;color:#202a78;font-weight:bold;right:569.0px;">+76.38%</div>
<div class="a" style="top:700.5px;font-size:13.5px;line-height:18px;color:#202a78;font-weight:bold;right:464.0px;">+77.82%</div>
<div class="a" style="top:700.5px;font-size:13.5px;line-height:18px;color:#202a78;font-weight:bold;right:359.0px;">+71.92%</div>
<div class="a" style="top:726.0px;font-size:13px;line-height:18px;color:#767676;left:70.5px;">판관비</div>
<div class="a" style="top:727.8px;font-size:12.5px;line-height:17px;color:#767676;right:1619.0px;">2,632</div>
<div class="a" style="top:727.8px;font-size:12.5px;line-height:17px;color:#767676;right:1514.0px;">2,442</div>
<div class="a" style="top:727.8px;font-size:12.5px;line-height:17px;color:#767676;right:1409.0px;">1,966</div>
<div class="a" style="top:727.8px;font-size:12.5px;line-height:17px;color:#767676;right:1304.0px;">1,628</div>
<div class="a" style="top:727.8px;font-size:12.5px;line-height:17px;color:#767676;right:1199.0px;">2,058</div>
<div class="a" style="top:727.8px;font-size:12.5px;line-height:17px;color:#767676;right:1094.0px;">2,202</div>
<div class="a" style="top:727.8px;font-size:12.5px;line-height:17px;color:#767676;right:989.0px;">1,617</div>
<div class="a" style="top:727.8px;font-size:12.5px;line-height:17px;color:#767676;right:884.0px;">1,920</div>
<div class="a" style="top:727.8px;font-size:12.5px;line-height:17px;color:#767676;right:779.0px;">1,501</div>
<div class="a" style="top:727.8px;font-size:12.5px;line-height:17px;color:#767676;right:674.0px;">2,224</div>
<div class="a" style="top:727.8px;font-size:12.5px;line-height:17px;color:#767676;right:569.0px;">1,887</div>
<div class="a" style="top:727.8px;font-size:12.5px;line-height:17px;color:#767676;right:464.0px;">1,777</div>
<div class="a" style="top:727.8px;font-size:12.5px;line-height:17px;color:#767676;right:359.0px;">23,854</div>
<div class="a" style="left:52px;top:748px;width:1522px;height:1px;background:#e6e6ec;"></div>
<div class="a" style="top:752.0px;font-size:13px;line-height:18px;color:#767676;left:70.5px;">영업이익</div>
<div class="a" style="top:752.5px;font-size:13px;line-height:18px;color:#111;font-weight:bold;right:1619.0px;letter-spacing:0.2px;">2,560</div>
<div class="a" style="top:752.5px;font-size:13px;line-height:18px;color:#111;font-weight:bold;right:1514.0px;letter-spacing:0.2px;">2,505</div>
<div class="a" style="top:752.5px;font-size:13px;line-height:18px;color:#111;font-weight:bold;right:1409.0px;letter-spacing:0.2px;">4,199</div>
<div class="a" style="top:752.5px;font-size:13px;line-height:18px;color:#111;font-weight:bold;right:1304.0px;letter-spacing:0.2px;">5,615</div>
<div class="a" style="top:752.5px;font-size:13px;line-height:18px;color:#111;font-weight:bold;right:1199.0px;letter-spacing:0.2px;">2,797</div>
<div class="a" style="top:752.5px;font-size:13px;line-height:18px;color:#111;font-weight:bold;right:1094.0px;letter-spacing:0.2px;">4,746</div>
<div class="a" style="top:752.5px;font-size:13px;line-height:18px;color:#111;font-weight:bold;right:989.0px;letter-spacing:0.2px;">4,847</div>
<div class="a" style="top:752.5px;font-size:13px;line-height:18px;color:#111;font-weight:bold;right:884.0px;letter-spacing:0.2px;">2,441</div>
<div class="a" style="top:752.5px;font-size:13px;line-height:18px;color:#111;font-weight:bold;right:779.0px;letter-spacing:0.2px;">3,201</div>
<div class="a" style="top:752.5px;font-size:13px;line-height:18px;color:#111;font-weight:bold;right:674.0px;letter-spacing:0.2px;">4,145</div>
<div class="a" style="top:752.5px;font-size:13px;line-height:18px;color:#111;font-weight:bold;right:569.0px;letter-spacing:0.2px;">5,711</div>
<div class="a" style="top:752.5px;font-size:13px;line-height:18px;color:#111;font-weight:bold;right:464.0px;letter-spacing:0.2px;">5,473</div>
<div class="a" style="top:752.5px;font-size:13px;line-height:18px;color:#111;font-weight:bold;right:359.0px;letter-spacing:0.2px;">48,242</div>
<div class="a" style="left:52px;top:775px;width:1522px;height:25px;background:#edf3fc;"></div>
<div class="a" style="left:52px;top:774px;width:1522px;height:1px;background:#d5dff0;"></div>
<div class="a" style="top:779.0px;font-size:12.5px;line-height:17px;color:#202a78;font-weight:bold;left:80.0px;">영업이익률</div>
<div class="a" style="left:52px;top:800px;width:1522px;height:1px;background:#d5dff0;"></div>
<div class="a" style="top:778.5px;font-size:13.5px;line-height:18px;color:#202a78;font-weight:bold;right:1619.0px;">+33.07%</div>
<div class="a" style="top:778.5px;font-size:13.5px;line-height:18px;color:#202a78;font-weight:bold;right:1514.0px;">+33.79%</div>
<div class="a" style="top:778.5px;font-size:13.5px;line-height:18px;color:#202a78;font-weight:bold;right:1409.0px;">+48.43%</div>
<div class="a" style="top:778.5px;font-size:13.5px;line-height:18px;color:#202a78;font-weight:bold;right:1304.0px;">+57.28%</div>
<div class="a" style="top:778.5px;font-size:13.5px;line-height:18px;color:#202a78;font-weight:bold;right:1199.0px;">+38.87%</div>
<div class="a" style="top:778.5px;font-size:13.5px;line-height:18px;color:#202a78;font-weight:bold;right:1094.0px;">+50.37%</div>
<div class="a" style="top:778.5px;font-size:13.5px;line-height:18px;color:#202a78;font-weight:bold;right:989.0px;">+55.88%</div>
<div class="a" style="top:778.5px;font-size:13.5px;line-height:18px;color:#202a78;font-weight:bold;right:884.0px;">+37.41%</div>
<div class="a" style="top:778.5px;font-size:13.5px;line-height:18px;color:#202a78;font-weight:bold;right:779.0px;">+45.66%</div>
<div class="a" style="top:778.5px;font-size:13.5px;line-height:18px;color:#202a78;font-weight:bold;right:674.0px;">+48.64%</div>
<div class="a" style="top:778.5px;font-size:13.5px;line-height:18px;color:#202a78;font-weight:bold;right:569.0px;">+57.41%</div>
<div class="a" style="top:778.5px;font-size:13.5px;line-height:18px;color:#202a78;font-weight:bold;right:464.0px;">+58.74%</div>
<div class="a" style="top:778.5px;font-size:13.5px;line-height:18px;color:#202a78;font-weight:bold;right:359.0px;">+48.13%</div>
<div class="a" style="top:804.0px;font-size:13px;line-height:18px;color:#767676;left:70.5px;">영업외수익</div>
<div class="a" style="top:805.8px;font-size:12.5px;line-height:17px;color:#767676;right:1619.0px;">7,683</div>
<div class="a" style="top:805.8px;font-size:12.5px;line-height:17px;color:#767676;right:1514.0px;">7,159</div>
<div class="a" style="top:805.8px;font-size:12.5px;line-height:17px;color:#767676;right:1409.0px;">6,650</div>
<div class="a" style="top:805.8px;font-size:12.5px;line-height:17px;color:#767676;right:1304.0px;">6,667</div>
<div class="a" style="top:805.8px;font-size:12.5px;line-height:17px;color:#767676;right:1199.0px;">4,276</div>
<div class="a" style="top:805.8px;font-size:12.5px;line-height:17px;color:#767676;right:1094.0px;">5,399</div>
<div class="a" style="top:805.8px;font-size:12.5px;line-height:17px;color:#767676;right:989.0px;">4,779</div>
<div class="a" style="top:805.8px;font-size:12.5px;line-height:17px;color:#767676;right:884.0px;">6,104</div>
<div class="a" style="top:805.8px;font-size:12.5px;line-height:17px;color:#767676;right:779.0px;">6,141</div>
<div class="a" style="top:805.8px;font-size:12.5px;line-height:17px;color:#767676;right:674.0px;">7,245</div>
<div class="a" style="top:805.8px;font-size:12.5px;line-height:17px;color:#767676;right:569.0px;">5,131</div>
<div class="a" style="top:805.8px;font-size:12.5px;line-height:17px;color:#767676;right:464.0px;">7,674</div>
<div class="a" style="top:805.8px;font-size:12.5px;line-height:17px;color:#767676;right:359.0px;">74,908</div>
<div class="a" style="left:52px;top:826px;width:1522px;height:1px;background:#e6e6ec;"></div>
<div class="a" style="top:830.0px;font-size:13px;line-height:18px;color:#767676;left:70.5px;">영업외비용</div>
<div class="a" style="top:831.8px;font-size:12.5px;line-height:17px;color:#767676;right:1619.0px;">1,631</div>
<div class="a" style="top:831.8px;font-size:12.5px;line-height:17px;color:#767676;right:1514.0px;">1,547</div>
<div class="a" style="top:831.8px;font-size:12.5px;line-height:17px;color:#767676;right:1409.0px;">2,637</div>
<div class="a" style="top:831.8px;font-size:12.5px;line-height:17px;color:#767676;right:1304.0px;">2,147</div>
<div class="a" style="top:831.8px;font-size:12.5px;line-height:17px;color:#767676;right:1199.0px;">2,294</div>
<div class="a" style="top:831.8px;font-size:12.5px;line-height:17px;color:#767676;right:1094.0px;">2,571</div>
<div class="a" style="top:831.8px;font-size:12.5px;line-height:17px;color:#767676;right:989.0px;">2,622</div>
<div class="a" style="top:831.8px;font-size:12.5px;line-height:17px;color:#767676;right:884.0px;">2,308</div>
<div class="a" style="top:831.8px;font-size:12.5px;line-height:17px;color:#767676;right:779.0px;">2,544</div>
<div class="a" style="top:831.8px;font-size:12.5px;line-height:17px;color:#767676;right:674.0px;">1,817</div>
<div class="a" style="top:831.8px;font-size:12.5px;line-height:17px;color:#767676;right:569.0px;">2,797</div>
<div class="a" style="top:831.8px;font-size:12.5px;line-height:17px;color:#767676;right:464.0px;">2,047</div>
<div class="a" style="top:831.8px;font-size:12.5px;line-height:17px;color:#767676;right:359.0px;">26,962</div>
<div class="a" style="left:52px;top:852px;width:1522px;height:1px;background:#e6e6ec;"></div>
<div class="a" style="top:856.0px;font-size:13px;line-height:18px;color:#767676;left:70.5px;">법인세차감전순이익</div>
<div class="a" style="top:856.5px;font-size:13px;line-height:18px;color:#111;font-weight:bold;right:1619.0px;letter-spacing:0.2px;">8,612</div>
<div class="a" style="top:856.5px;font-size:13px;line-height:18px;color:#111;font-weight:bold;right:1514.0px;letter-spacing:0.2px;">8,117</div>
<div class="a" style="top:856.5px;font-size:13px;line-height:18px;color:#111;font-weight:bold;right:1409.0px;letter-spacing:0.2px;">8,212</div>
<div class="a" style="top:856.5px;font-size:13px;line-height:18px;color:#111;font-weight:bold;right:1304.0px;letter-spacing:0.2px;">10,135</div>
<div class="a" style="top:856.5px;font-size:13px;line-height:18px;color:#111;font-weight:bold;right:1199.0px;letter-spacing:0.2px;">4,779</div>
<div class="a" style="top:856.5px;font-size:13px;line-height:18px;color:#111;font-weight:bold;right:1094.0px;letter-spacing:0.2px;">7,575</div>
<div class="a" style="top:856.5px;font-size:13px;line-height:18px;color:#111;font-weight:bold;right:989.0px;letter-spacing:0.2px;">7,004</div>
<div class="a" style="top:856.5px;font-size:13px;line-height:18px;color:#111;font-weight:bold;right:884.0px;letter-spacing:0.2px;">6,237</div>
<div class="a" style="top:856.5px;font-size:13px;line-height:18px;color:#111;font-weight:bold;right:779.0px;letter-spacing:0.2px;">6,798</div>
<div class="a" style="top:856.5px;font-size:13px;line-height:18px;color:#111;font-weight:bold;right:674.0px;letter-spacing:0.2px;">9,573</div>
<div class="a" style="top:856.5px;font-size:13px;line-height:18px;color:#111;font-weight:bold;right:569.0px;letter-spacing:0.2px;">8,045</div>
<div class="a" style="top:856.5px;font-size:13px;line-height:18px;color:#111;font-weight:bold;right:464.0px;letter-spacing:0.2px;">11,100</div>
<div class="a" style="top:856.5px;font-size:13px;line-height:18px;color:#111;font-weight:bold;right:359.0px;letter-spacing:0.2px;">96,187</div>
<div class="a" style="left:52px;top:878px;width:1522px;height:1px;background:#e6e6ec;"></div>
<div class="a" style="top:882.0px;font-size:13px;line-height:18px;color:#767676;left:70.5px;">법인세비용</div>
<div class="a" style="top:883.8px;font-size:12.5px;line-height:17px;color:#767676;right:1619.0px;">778</div>
<div class="a" style="top:883.8px;font-size:12.5px;line-height:17px;color:#767676;right:1514.0px;">418</div>
<div class="a" style="top:883.8px;font-size:12.5px;line-height:17px;color:#767676;right:1409.0px;">454</div>
<div class="a" style="top:883.8px;font-size:12.5px;line-height:17px;color:#767676;right:1304.0px;">466</div>
<div class="a" style="top:883.8px;font-size:12.5px;line-height:17px;color:#767676;right:1199.0px;">768</div>
<div class="a" style="top:883.8px;font-size:12.5px;line-height:17px;color:#767676;right:1094.0px;">550</div>
<div class="a" style="top:883.8px;font-size:12.5px;line-height:17px;color:#767676;right:989.0px;">532</div>
<div class="a" style="top:883.8px;font-size:12.5px;line-height:17px;color:#767676;right:884.0px;">879</div>
<div class="a" style="top:883.8px;font-size:12.5px;line-height:17px;color:#767676;right:779.0px;">712</div>
<div class="a" style="top:883.8px;font-size:12.5px;line-height:17px;color:#767676;right:674.0px;">818</div>
<div class="a" style="top:883.8px;font-size:12.5px;line-height:17px;color:#767676;right:569.0px;">340</div>
<div class="a" style="top:883.8px;font-size:12.5px;line-height:17px;color:#767676;right:464.0px;">440</div>
<div class="a" style="top:883.8px;font-size:12.5px;line-height:17px;color:#767676;right:359.0px;">7,155</div>
<div class="a" style="left:52px;top:904px;width:1522px;height:1px;background:#e6e6ec;"></div>
<div class="a" style="top:908.0px;font-size:13px;line-height:18px;color:#767676;left:70.5px;">당기순이익</div>
<div class="a" style="top:908.5px;font-size:13px;line-height:18px;color:#111;font-weight:bold;right:1619.0px;letter-spacing:0.2px;">7,834</div>
<div class="a" style="top:908.5px;font-size:13px;line-height:18px;color:#111;font-weight:bold;right:1514.0px;letter-spacing:0.2px;">7,699</div>
<div class="a" style="top:908.5px;font-size:13px;line-height:18px;color:#111;font-weight:bold;right:1409.0px;letter-spacing:0.2px;">7,758</div>
<div class="a" style="top:908.5px;font-size:13px;line-height:18px;color:#111;font-weight:bold;right:1304.0px;letter-spacing:0.2px;">9,669</div>
<div class="a" style="top:908.5px;font-size:13px;line-height:18px;color:#111;font-weight:bold;right:1199.0px;letter-spacing:0.2px;">4,011</div>
<div class="a" style="top:908.5px;font-size:13px;line-height:18px;color:#111;font-weight:bold;right:1094.0px;letter-spacing:0.2px;">7,024</div>
<div class="a" style="top:908.5px;font-size:13px;line-height:18px;color:#111;font-weight:bold;right:989.0px;letter-spacing:0.2px;">6,473</div>
<div class="a" style="top:908.5px;font-size:13px;line-height:18px;color:#111;font-weight:bold;right:884.0px;letter-spacing:0.2px;">5,357</div>
<div class="a" style="top:908.5px;font-size:13px;line-height:18px;color:#111;font-weight:bold;right:779.0px;letter-spacing:0.2px;">6,086</div>
<div class="a" style="top:908.5px;font-size:13px;line-height:18px;color:#111;font-weight:bold;right:674.0px;letter-spacing:0.2px;">8,755</div>
<div class="a" style="top:908.5px;font-size:13px;line-height:18px;color:#111;font-weight:bold;right:569.0px;letter-spacing:0.2px;">7,705</div>
<div class="a" style="top:908.5px;font-size:13px;line-height:18px;color:#111;font-weight:bold;right:464.0px;letter-spacing:0.2px;">10,660</div>
<div class="a" style="top:908.5px;font-size:13px;line-height:18px;color:#111;font-weight:bold;right:359.0px;letter-spacing:0.2px;">89,032</div>
<div class="a" style="left:52px;top:931px;width:1522px;height:25px;background:#edf3fc;"></div>
<div class="a" style="left:52px;top:930px;width:1522px;height:1px;background:#d5dff0;"></div>
<div class="a" style="top:935.0px;font-size:12.5px;line-height:17px;color:#202a78;font-weight:bold;left:80.0px;">순이익률</div>
<div class="a" style="left:52px;top:956px;width:1522px;height:1px;background:#d5dff0;"></div>
<div class="a" style="top:934.5px;font-size:13.5px;line-height:18px;color:#202a78;font-weight:bold;right:1619.0px;">+101.20%</div>
<div class="a" style="top:934.5px;font-size:13.5px;line-height:18px;color:#202a78;font-weight:bold;right:1514.0px;">+103.86%</div>
<div class="a" style="top:934.5px;font-size:13.5px;line-height:18px;color:#202a78;font-weight:bold;right:1409.0px;">+89.49%</div>
<div class="a" style="top:934.5px;font-size:13.5px;line-height:18px;color:#202a78;font-weight:bold;right:1304.0px;">+98.63%</div>
<div class="a" style="top:934.5px;font-size:13.5px;line-height:18px;color:#202a78;font-weight:bold;right:1199.0px;">+55.74%</div>
<div class="a" style="top:934.5px;font-size:13.5px;line-height:18px;color:#202a78;font-weight:bold;right:1094.0px;">+74.55%</div>
<div class="a" style="top:934.5px;font-size:13.5px;line-height:18px;color:#202a78;font-weight:bold;right:989.0px;">+74.62%</div>
<div class="a" style="top:934.5px;font-size:13.5px;line-height:18px;color:#202a78;font-weight:bold;right:884.0px;">+82.12%</div>
<div class="a" style="top:934.5px;font-size:13.5px;line-height:18px;color:#202a78;font-weight:bold;right:779.0px;">+86.81%</div>
<div class="a" style="top:934.5px;font-size:13.5px;line-height:18px;color:#202a78;font-weight:bold;right:674.0px;">+102.73%</div>
<div class="a" style="top:934.5px;font-size:13.5px;line-height:18px;color:#202a78;font-weight:bold;right:569.0px;">+77.46%</div>
<div class="a" style="top:934.5px;font-size:13.5px;line-height:18px;color:#202a78;font-weight:bold;right:464.0px;">+114.41%</div>
<div class="a" style="top:934.5px;font-size:13.5px;line-height:18px;color:#202a78;font-weight:bold;right:359.0px;">+88.82%</div>
<div class="a" style="left:52px;top:956px;width:1522px;height:1px;background:#d5dff0;"></div>
<div class="a" style="left:209px;top:566px;width:1px;height:390px;background:#dcdcf0;"></div>
<div class="a" style="top:541.0px;font-size:15px;line-height:21px;color:#737b8a;left:1382.5px;width:600px;text-align:center;">파이차트</div>
<div class="a" style="top:699.5px;font-size:14px;line-height:19px;color:#8c8c8c;left:1383.0px;width:600px;text-align:center;">28.08%</div>
<div class="a" style="top:699.5px;font-size:14px;line-height:19px;color:#a6a6a6;left:1454.5px;width:600px;text-align:center;">72%</div>
<div class="a" style="top:777.5px;font-size:14px;line-height:19px;color:#8c8c8c;left:1383.0px;width:600px;text-align:center;">51.87%</div>
<div class="a" style="top:777.5px;font-size:14px;line-height:19px;color:#a6a6a6;left:1454.5px;width:600px;text-align:center;">48%</div>
<div class="a" style="top:933.5px;font-size:14px;line-height:19px;color:#8c8c8c;left:1383.0px;width:600px;text-align:center;">11.18%</div>
<div class="a" style="top:933.5px;font-size:14px;line-height:19px;color:#a6a6a6;left:1454.5px;width:600px;text-align:center;">89%</div>
<div class="a" style="left:0px;top:980px;width:1916px;height:1px;background:#ababab;"></div>
<div class="a" style="left:0px;top:981px;width:1916px;height:27px;background:#e6e6e6;"></div>
<div class="a" style="left:0px;top:1008px;width:1916px;height:1px;background:#c6c6c6;"></div>
<div class="a" style="left:0px;top:1009px;width:1916px;height:20px;background:#f3f3f3;"></div>
<svg class="a" style="left:25px;top:988px;" width="5" height="9" viewBox="0 0 5 9"><path d="M5 0v9l-5-4.5z" fill="#b0b0b0"/></svg>
<svg class="a" style="left:54px;top:988px;" width="5" height="9" viewBox="0 0 5 9"><path d="M0 0v9l5-4.5z" fill="#b0b0b0"/></svg>
<div class="a" style="left:99px;top:980px;width:105px;height:25px;box-sizing:border-box;border:1px solid #ababab;background:#fff;border-top:none;border-bottom:none;"></div>
<div class="a" style="left:99px;top:1003px;width:105px;height:2px;background:#217346;"></div>
<div class="a" style="top:983.5px;font-size:12.5px;line-height:17px;color:#217346;left:-148.5px;width:600px;text-align:center;">V_손익계산서</div>
<div class="a" style="top:984.0px;font-size:12.5px;line-height:17px;color:#444;left:-76.5px;width:600px;text-align:center;">D1</div>
<div class="a" style="left:245px;top:984px;width:1px;height:20px;background:#b5b5b5;"></div>
<div class="a" style="top:984.0px;font-size:12.5px;line-height:17px;color:#444;left:-35.5px;width:600px;text-align:center;">P1</div>
<div class="a" style="left:284px;top:984px;width:1px;height:20px;background:#b5b5b5;"></div>
<svg class="a" style="left:317px;top:986px;" width="17" height="17" viewBox="0 0 17 17"><circle cx="8.5" cy="8.5" r="7.5" fill="none" stroke="#666" stroke-width="1.2"/><path d="M8.5 4.5v8M4.5 8.5h8" stroke="#666" stroke-width="1.4"/></svg>
<div class="a" style="left:1151px;top:989px;width:2px;height:2px;background:#9a9a9a;"></div>
<div class="a" style="left:1151px;top:993px;width:2px;height:2px;background:#9a9a9a;"></div>
<div class="a" style="left:1151px;top:997px;width:2px;height:2px;background:#9a9a9a;"></div>
<div class="a" style="left:1168px;top:987px;width:732px;height:15px;box-sizing:border-box;border:1px solid #ababab;background:#fff;"></div>
<div class="a" style="left:1182px;top:987px;width:1px;height:15px;background:#ababab;"></div>
<svg class="a" style="left:1172px;top:990px;" width="5" height="9" viewBox="0 0 5 9"><path d="M5 0v9l-5-4.5z" fill="#555"/></svg>
<div class="a" style="left:1815px;top:988px;width:70px;height:13px;background:#dadada;"></div>
<div class="a" style="left:1885px;top:987px;width:1px;height:15px;background:#ababab;"></div>
<svg class="a" style="left:1890px;top:990px;" width="5" height="9" viewBox="0 0 5 9"><path d="M0 0v9l5-4.5z" fill="#555"/></svg>
<div class="a" style="top:1011.0px;font-size:11px;line-height:15px;color:#333;left:7.5px;">준비</div>
<svg class="a" style="left:50px;top:1012px;" width="13" height="13" viewBox="0 0 13 13"><circle cx="3" cy="3" r="2.6" fill="#444"/><rect x="3" y="3" width="10" height="10" fill="none" stroke="#444" stroke-width="1"/><path d="M3 6h10M3 9h10M6.5 3v10M9.5 3v10" stroke="#444" stroke-width="0.8"/></svg>
<div class="a" style="left:1629px;top:1009px;width:38px;height:20px;background:#d4d4d4;"></div>
<svg class="a" style="left:1640px;top:1012px;" width="14" height="14" viewBox="0 0 14 14"><rect x="0.5" y="0.5" width="13" height="13" fill="none" stroke="#555"/><path d="M0.5 4.8h13M0.5 9.2h13M4.8 0.5v13M9.2 0.5v13" stroke="#555"/></svg>
<svg class="a" style="left:1678px;top:1012px;" width="14" height="14" viewBox="0 0 14 14"><rect x="0.5" y="0.5" width="13" height="13" fill="none" stroke="#555"/><rect x="3" y="3" width="8" height="8" fill="none" stroke="#555"/><path d="M4.5 5.5h5M4.5 7.5h5M4.5 9.5h5" stroke="#555" stroke-width="0.8"/></svg>
<svg class="a" style="left:1716px;top:1012px;" width="14" height="14" viewBox="0 0 14 14"><rect x="0.5" y="0.5" width="13" height="13" fill="none" stroke="#555"/><path d="M0.5 7h13M5 0.5v6.5M9 0.5v6.5" stroke="#555"/></svg>
<div class="a" style="left:1747px;top:1018px;width:8px;height:2px;background:#444;"></div>
<div class="a" style="left:1757px;top:1018px;width:101px;height:1px;background:#9a9a9a;"></div>
<div class="a" style="left:1806px;top:1012px;width:4px;height:13px;background:#555;"></div>
<div class="a" style="left:1861px;top:1018px;width:8px;height:2px;background:#444;"></div>
<div class="a" style="left:1864px;top:1015px;width:2px;height:8px;background:#444;"></div>
<div class="a" style="top:1010.0px;font-size:12.5px;line-height:17px;color:#333;left:1880.0px;">100%</div>
</body></html>
